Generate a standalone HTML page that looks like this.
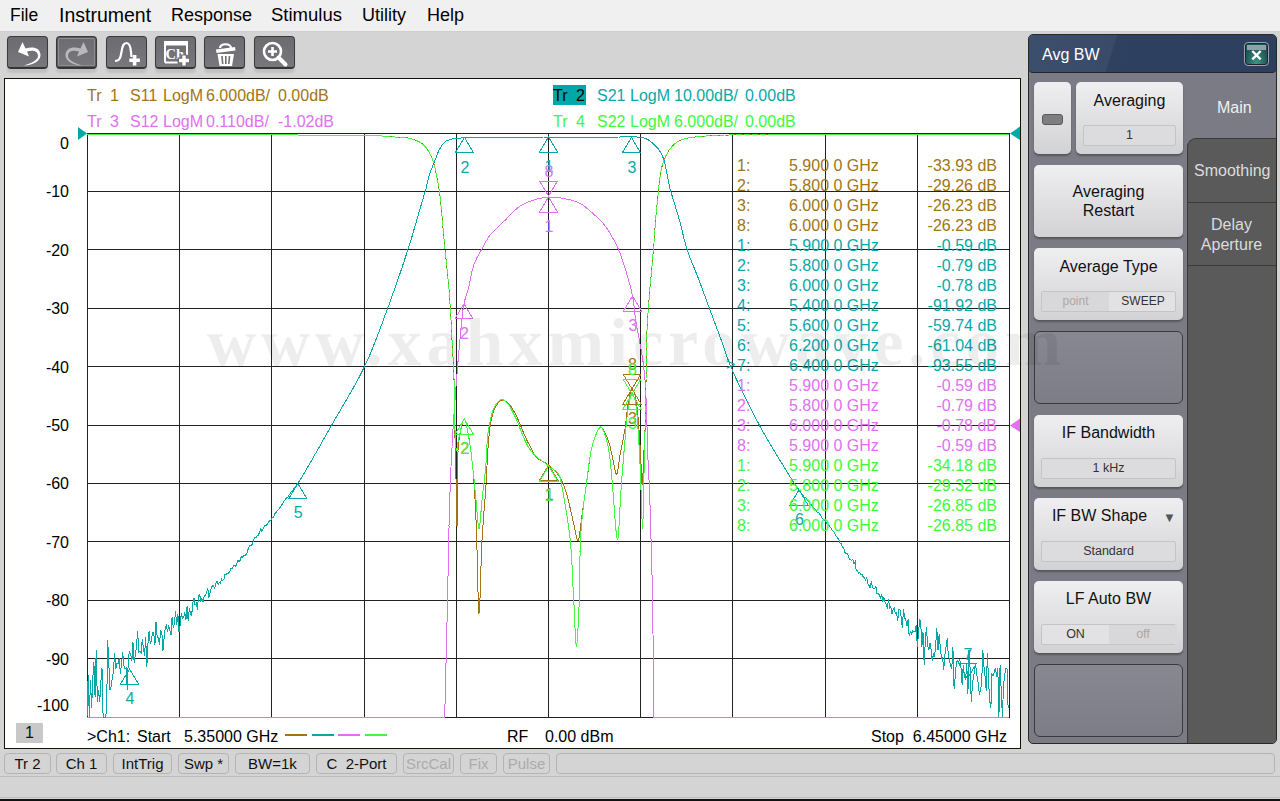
<!DOCTYPE html>
<html><head><meta charset="utf-8">
<style>
*{margin:0;padding:0;box-sizing:border-box}
html,body{width:1280px;height:801px;overflow:hidden;background:#d4d4d4;font-family:"Liberation Sans",sans-serif;position:relative}
.a{position:absolute;white-space:nowrap}
#menu{left:0;top:0;width:1280px;height:32px;background:#f0f0f0;border-bottom:1px solid #cecece}
.mi{font-size:19px;color:#000;top:4px;line-height:22px}
.tb{width:41px;height:33px;border-radius:4px;background:linear-gradient(#6c6b70,#78777c);border:1px solid #3a3a3c;border-bottom:2px solid #343436;box-shadow:0 4px 2px rgba(0,0,0,0.09)}
.tb svg{position:absolute;left:0;top:0}
#chart{left:4px;top:78px;width:1017px;height:671px;background:#fff;border:1px solid #141400}
.t16{font-size:16px;line-height:18px}
.yl{font-size:16px;line-height:18px;color:#000;text-align:right;width:40px;left:29px}
.c1{color:#a27414}.c2{color:#08a8a8}.c3{color:#e070f0}.c4{color:#40f840}
.sb{top:753px;height:21px;border:1px solid #b4b4b4;border-radius:4px;font-size:15px;color:#111;text-align:center;line-height:19px;background:#d4d4d4}
.sb.dis{color:#ababab}
#panel{left:1028px;top:34px;width:249px;height:710px;border-radius:5px;background:#7a7b84;border:1px solid #2a2a22;overflow:hidden}
.btn{position:absolute;border-radius:5px;background:linear-gradient(#efeff1,#d2d2d5);box-shadow:0 2px 2px rgba(0,0,0,0.3);font-size:16px;color:#111;text-align:center;line-height:19px}
.vb{position:absolute;left:7px;right:7px;height:21px;background:#dcdcde;border:1px solid #c4c4c6;border-radius:2px;font-size:12.5px;color:#333;line-height:19px;text-align:center}
.slot{position:absolute;border-radius:6px;background:linear-gradient(#878892,#7c7d86);border:1px solid #3a3a3e}
svg text.ml{font-family:"Liberation Sans",sans-serif;font-size:16px}
.mt{font-size:16px;line-height:18px}
</style></head><body>
<div id="menu" class="a"></div>
<div class="a mi" style="left:10px;font-size:17.5px">File</div>
<div class="a mi" style="left:59px;font-size:19.5px">Instrument</div>
<div class="a mi" style="left:171px;font-size:18px">Response</div>
<div class="a mi" style="left:271px;font-size:18.5px">Stimulus</div>
<div class="a mi" style="left:362px;font-size:18px">Utility</div>
<div class="a mi" style="left:427px;font-size:18px">Help</div>

<!-- toolbar -->
<div class="a tb" style="left:7px;top:36px"><svg width="41" height="33" viewBox="0 0 41 33"><path d="M14.5 5 L10 15 L21 19.5 L19 14.5 C25 12.5 30 14 30 19 C30 23 24 26 16 28.5 C26 28 32.5 24 32.5 18 C32.5 11 25 9 17.5 11.5 Z" fill="#fff"/></svg></div>
<div class="a tb" style="left:56px;top:36px;box-shadow:inset 0 0 0 1px #58575c, inset 0 0 0 2px #8e8d92, 0 4px 2px rgba(0,0,0,0.09)"><svg width="41" height="33" viewBox="0 0 41 33"><path d="M26.5 5 L31 15 L20 19.5 L22 14.5 C16 12.5 11 14 11 19 C11 23 17 26 25 28.5 C15 28 8.5 24 8.5 18 C8.5 11 16 9 23.5 11.5 Z" fill="#b9b9bb"/></svg></div>
<div class="a tb" style="left:106px;top:36px"><svg width="41" height="33" viewBox="0 0 41 33"><path d="M8 24 C12.5 24 13.5 21 14.5 15 C15.5 8.5 16.5 6 19.5 6 C22.5 6 23.5 9 24 15 L24.5 20" stroke="#fff" stroke-width="2.2" fill="none"/><path d="M27.6 18 V28.6 M22.3 23.3 H32.9" stroke="#fff" stroke-width="3.6"/></svg></div>
<div class="a tb" style="left:155px;top:36px"><svg width="41" height="33" viewBox="0 0 41 33"><path d="M9 25.5 V5 H31 V18" stroke="#fff" stroke-width="2" fill="none"/><rect x="8" y="4.5" width="24" height="4" fill="#fff"/><path d="M9 25.5 H22" stroke="#fff" stroke-width="2"/><text x="9.5" y="21.5" font-family="Liberation Serif" font-weight="bold" font-size="14.5" fill="#fff">Ch</text><path d="M28 17.5 V30 M21.5 23.5 H34" stroke="#6f6e73" stroke-width="6"/><path d="M28 18.5 V28.5 M23 23.5 H33" stroke="#fff" stroke-width="3.4"/></svg></div>
<div class="a tb" style="left:204px;top:36px"><svg width="41" height="33" viewBox="0 0 41 33"><path d="M15 11 C15.5 6 25.5 6 26 11" stroke="#fff" stroke-width="2.2" fill="none"/><path d="M11 12.5 L30 10 L30.5 13.5 L11.5 16 Z" fill="#fff"/><path d="M12.5 17 H29 L27 29 H14.5 Z" fill="#fff"/><path d="M17 19 L17.7 27 M20.8 19 V27 M24.5 19 L23.8 27" stroke="#6f6e73" stroke-width="1.6"/></svg></div>
<div class="a tb" style="left:254px;top:36px"><svg width="41" height="33" viewBox="0 0 41 33"><circle cx="17.5" cy="14.5" r="8.5" fill="none" stroke="#fff" stroke-width="2.6"/><path d="M23.5 20.5 L30.5 27.5" stroke="#fff" stroke-width="4" stroke-linecap="round"/><path d="M17.5 10 V19 M13 14.5 H22" stroke="#fff" stroke-width="2.6"/></svg></div>

<div id="chart" class="a"></div>

<!-- trace headers -->
<div class="a t16 c1" style="left:87px;top:87px">Tr</div><div class="a t16 c1" style="left:110px;top:87px">1</div><div class="a t16 c1" style="left:130px;top:87px">S11</div><div class="a t16 c1" style="left:163px;top:87px">LogM</div><div class="a t16 c1" style="left:206px;top:87px">6.000dB/</div><div class="a t16 c1" style="left:278px;top:87px">0.00dB</div>
<div class="a t16 c3" style="left:87px;top:113px">Tr</div><div class="a t16 c3" style="left:110px;top:113px">3</div><div class="a t16 c3" style="left:130px;top:113px">S12</div><div class="a t16 c3" style="left:163px;top:113px">LogM</div><div class="a t16 c3" style="left:206px;top:113px">0.110dB/</div><div class="a t16 c3" style="left:278px;top:113px">-1.02dB</div>
<div class="a" style="left:553px;top:85px;width:33px;height:20px;background:#00a8a8"></div>
<div class="a t16" style="left:553px;top:87px;color:#000">Tr</div><div class="a t16" style="left:576px;top:87px;color:#000">2</div><div class="a t16 c2" style="left:597px;top:87px">S21</div><div class="a t16 c2" style="left:630px;top:87px">LogM</div><div class="a t16 c2" style="left:674px;top:87px">10.00dB/</div><div class="a t16 c2" style="left:745px;top:87px">0.00dB</div>
<div class="a t16 c4" style="left:553px;top:113px">Tr</div><div class="a t16 c4" style="left:576px;top:113px">4</div><div class="a t16 c4" style="left:597px;top:113px">S22</div><div class="a t16 c4" style="left:630px;top:113px">LogM</div><div class="a t16 c4" style="left:674px;top:113px">6.000dB/</div><div class="a t16 c4" style="left:745px;top:113px">0.00dB</div>

<!-- y labels -->
<div class="a yl" style="top:135px">0</div>
<div class="a yl" style="top:183px">-10</div>
<div class="a yl" style="top:242px">-20</div>
<div class="a yl" style="top:300px">-30</div>
<div class="a yl" style="top:359px">-40</div>
<div class="a yl" style="top:417px">-50</div>
<div class="a yl" style="top:475px">-60</div>
<div class="a yl" style="top:534px">-70</div>
<div class="a yl" style="top:592px">-80</div>
<div class="a yl" style="top:651px">-90</div>
<div class="a yl" style="top:697px">-100</div>

<svg class="a" style="left:0;top:0" width="1280" height="801" viewBox="0 0 1280 801"><path d="M87.5 133 V717 M179.5 133 V717 M271.5 133 V717 M364.5 133 V717 M456.5 133 V717 M548.5 133 V717 M640.5 133 V717 M732.5 133 V717 M825.5 133 V717 M917.5 133 V717 M1009.5 133 V717 M87 133.5 H1009.5 M87 191.5 H1009.5 M87 249.5 H1009.5 M87 308.5 H1009.5 M87 366.5 H1009.5 M87 425.5 H1009.5 M87 483.5 H1009.5 M87 541.5 H1009.5 M87 600.5 H1009.5 M87 658.5 H1009.5 M87 717.5 H1009.5" stroke="#222" stroke-width="1" fill="none" shape-rendering="crispEdges"/><g fill="none" stroke-width="1" stroke-linejoin="miter" shape-rendering="crispEdges"><polyline points="87.0,717.0 444.7,717.0 447.5,601.6 447.5,601.6 447.5,601.4 447.5,601.2 447.5,600.9 447.5,600.4 447.5,600.0 447.5,599.4 447.6,598.7 447.6,598.0 447.6,597.2 447.6,596.3 447.6,595.4 447.6,594.3 447.7,593.3 447.7,592.1 447.7,590.9 447.7,589.6 447.7,588.3 447.8,586.9 447.8,585.5 447.8,584.0 447.9,582.5 447.9,580.9 447.9,579.3 447.9,577.6 448.0,575.9 448.0,574.2 448.0,572.4 448.1,570.6 448.1,568.8 448.2,566.9 448.2,565.0 448.2,563.1 448.3,561.2 448.3,559.3 448.3,557.3 448.4,555.3 448.4,553.3 448.5,551.4 448.5,549.4 448.5,547.4 448.6,545.3 448.6,543.3 448.7,541.3 448.7,539.3 448.8,537.3 448.8,535.4 448.8,533.4 448.9,531.4 448.9,529.5 449.0,527.6 449.0,525.7 449.1,523.8 449.1,522.0 449.2,520.1 449.2,518.3 449.2,516.6 449.3,514.9 449.3,513.2 449.4,511.5 449.4,509.9 449.5,508.3 449.5,506.8 449.5,505.4 449.6,503.9 449.6,502.6 449.7,501.3 449.7,500.0 449.8,498.3 449.8,496.6 449.9,494.9 449.9,493.2 450.0,491.6 450.0,490.0 450.1,488.5 450.2,486.9 450.2,485.4 450.3,483.9 450.3,482.4 450.4,480.9 450.4,479.5 450.5,478.0 450.6,476.6 450.6,475.2 450.7,473.7 450.7,472.3 450.8,470.9 450.9,469.5 450.9,468.1 451.0,466.7 451.1,465.4 451.1,464.0 451.2,462.6 451.3,461.1 451.3,459.7 451.4,458.3 451.5,456.9 451.6,455.4 451.6,454.0 451.7,452.5 451.8,451.0 451.9,449.6 452.0,448.1 452.0,446.7 452.1,445.2 452.2,443.8 452.3,442.3 452.4,440.9 452.4,439.4 452.5,438.0 452.6,436.6 452.7,435.1 452.8,433.7 452.9,432.2 452.9,430.8 453.0,429.3 453.1,427.9 453.2,426.4 453.3,425.0 453.4,423.5 453.5,422.0 453.6,420.6 453.7,419.1 453.8,417.7 453.9,416.2 454.0,414.7 454.1,413.3 454.2,411.8 454.3,410.3 454.4,408.9 454.5,407.4 454.6,405.9 454.7,404.4 454.8,403.0 454.9,401.5 455.0,400.0 455.1,398.5 455.2,397.1 455.3,395.6 455.4,394.1 455.5,392.6 455.7,391.1 455.8,389.6 455.9,388.1 456.0,386.6 456.1,385.1 456.2,383.6 456.3,382.0 456.5,380.5 456.6,379.0 456.7,377.5 456.8,375.9 456.9,374.4 457.1,372.9 457.2,371.4 457.3,369.9 457.4,368.3 457.6,366.8 457.7,365.3 457.8,363.8 457.9,362.3 458.1,360.8 458.2,359.3 458.3,357.9 458.5,356.4 458.6,354.9 458.7,353.5 458.8,352.0 459.0,350.6 459.1,349.2 459.2,347.8 459.4,346.4 459.5,345.0 459.6,343.4 459.8,341.8 459.9,340.2 460.1,338.6 460.2,337.0 460.4,335.3 460.5,333.7 460.7,332.1 460.8,330.5 460.9,328.9 461.1,327.3 461.2,325.7 461.4,324.1 461.5,322.6 461.7,321.0 461.8,319.5 462.0,318.0 462.2,316.5 462.3,315.1 462.5,313.7 462.7,312.3 462.8,310.9 463.0,309.6 463.2,308.4 463.4,307.1 463.6,305.9 463.8,304.8 464.0,303.7 464.4,302.0 464.7,300.5 465.1,299.2 465.5,297.9 465.9,296.6 466.3,295.4 466.7,294.2 467.2,292.9 467.6,291.5 468.0,290.0 468.3,288.8 468.6,287.5 468.9,286.1 469.2,284.7 469.5,283.3 469.8,281.8 470.1,280.3 470.4,278.8 470.7,277.2 471.0,275.7 471.4,274.2 471.7,272.7 472.0,271.2 472.4,269.7 472.8,268.3 473.2,267.0 473.6,265.6 474.0,264.4 474.5,263.0 475.1,261.6 475.7,260.3 476.3,259.0 476.9,257.8 477.6,256.6 478.2,255.4 478.9,254.2 479.6,253.0 480.3,251.8 480.9,250.6 481.6,249.4 482.3,248.1 483.0,246.8 483.7,245.5 484.4,244.2 485.1,242.9 485.8,241.6 486.6,240.3 487.4,239.1 488.2,237.8 489.1,236.5 490.0,235.3 490.8,234.3 491.7,233.2 492.6,232.2 493.6,231.2 494.6,230.2 495.6,229.2 496.6,228.2 497.6,227.2 498.7,226.2 499.8,225.2 500.8,224.2 501.9,223.2 502.9,222.3 504.0,221.3 505.0,220.3 506.1,219.3 507.1,218.2 508.2,217.1 509.2,216.0 510.3,214.9 511.3,213.9 512.4,212.8 513.4,211.7 514.5,210.7 515.6,209.7 516.7,208.8 517.8,207.9 518.9,207.0 520.0,206.2 521.3,205.4 522.6,204.7 524.0,203.9 525.4,203.3 526.7,202.7 528.1,202.1 529.5,201.5 530.9,201.0 532.3,200.6 533.6,200.1 535.0,199.7 536.4,199.3 537.7,198.9 539.0,198.6 540.3,198.3 541.7,198.0 543.0,197.8 544.4,197.6 545.7,197.5 547.1,197.3 548.5,197.2 549.8,197.2 551.2,197.2 552.5,197.2 553.9,197.3 555.3,197.4 556.7,197.5 558.1,197.7 559.5,197.8 560.9,198.0 562.3,198.3 563.7,198.5 565.0,198.8 566.4,199.0 567.8,199.3 569.3,199.7 570.7,200.0 572.1,200.4 573.5,200.8 574.8,201.2 576.2,201.7 577.5,202.2 578.8,202.8 580.0,203.4 581.2,204.1 582.4,204.8 583.6,205.6 584.7,206.4 585.8,207.3 586.9,208.2 587.9,209.1 589.0,210.0 590.1,211.0 591.2,212.0 592.3,212.9 593.3,213.8 594.3,214.7 595.4,215.7 596.4,216.6 597.5,217.6 598.6,218.6 599.6,219.7 600.6,220.7 601.6,221.8 602.6,222.8 603.5,223.9 604.4,225.0 605.3,226.2 606.2,227.4 607.1,228.7 607.9,229.9 608.8,231.2 609.6,232.6 610.3,233.9 611.1,235.1 611.8,236.4 612.5,237.7 613.2,238.9 613.8,240.0 614.6,241.4 615.3,242.7 615.9,244.0 616.5,245.2 617.1,246.5 617.8,247.9 618.4,249.4 618.9,250.5 619.3,251.7 619.8,252.9 620.3,254.1 620.7,255.4 621.2,256.7 621.7,258.0 622.2,259.4 622.7,260.8 623.1,262.2 623.6,263.6 624.1,265.1 624.5,266.5 625.0,268.0 625.4,269.3 625.8,270.6 626.2,271.9 626.6,273.2 627.0,274.6 627.4,276.0 627.8,277.4 628.2,278.8 628.6,280.2 629.0,281.7 629.4,283.1 629.8,284.6 630.2,286.0 630.6,287.5 630.9,288.9 631.3,290.3 631.6,291.8 631.9,293.2 632.2,294.6 632.5,296.0 632.8,297.5 633.0,298.9 633.3,300.3 633.5,301.8 633.7,303.2 633.9,304.6 634.0,306.0 634.2,307.4 634.4,308.9 634.5,310.3 634.7,311.7 634.8,313.1 635.0,314.6 635.2,316.0 635.4,317.5 635.6,319.0 635.8,320.5 636.0,322.0 636.2,323.4 636.5,324.7 636.7,326.1 636.9,327.6 637.2,329.0 637.5,330.4 637.8,331.9 638.0,333.4 638.3,334.8 638.6,336.3 638.9,337.8 639.2,339.3 639.5,340.8 639.7,342.2 640.0,343.7 640.3,345.2 640.6,346.6 640.8,348.1 641.1,349.5 641.3,350.9 641.6,352.3 641.8,353.7 642.0,355.0 642.2,356.5 642.5,358.0 642.7,359.4 642.9,360.8 643.1,362.2 643.2,363.5 643.4,364.8 643.6,366.1 643.8,367.5 643.9,368.9 644.1,370.3 644.2,371.7 644.4,373.2 644.6,374.8 644.7,376.4 644.9,378.2 645.0,380.0 645.1,381.1 645.2,382.2 645.2,383.4 645.3,384.6 645.4,385.8 645.5,387.0 645.5,388.3 645.6,389.7 645.7,391.0 645.7,392.4 645.8,393.8 645.9,395.3 645.9,396.7 646.0,398.2 646.1,399.7 646.1,401.2 646.2,402.8 646.2,404.3 646.3,405.9 646.4,407.5 646.4,409.1 646.5,410.7 646.5,412.3 646.6,413.9 646.6,415.6 646.7,417.2 646.7,418.9 646.8,420.5 646.8,422.2 646.9,423.8 646.9,425.5 647.0,427.1 647.0,428.8 647.1,430.4 647.1,432.1 647.2,433.7 647.2,435.3 647.2,436.9 647.3,438.5 647.3,440.1 647.4,441.6 647.4,443.2 647.5,444.7 647.5,446.2 647.6,447.7 647.6,449.2 647.7,450.6 647.7,452.1 647.8,453.5 647.8,454.8 647.9,456.2 647.9,457.5 647.9,458.8 648.0,460.0 648.1,461.7 648.1,463.4 648.2,464.9 648.3,466.5 648.4,468.0 648.4,469.5 648.5,470.9 648.6,472.3 648.6,473.7 648.7,475.0 648.8,476.4 648.8,477.7 648.9,479.1 649.0,480.4 649.0,481.7 649.1,483.1 649.1,484.5 649.2,485.8 649.3,487.2 649.3,488.7 649.4,490.2 649.5,491.7 649.5,493.2 649.6,494.8 649.7,496.5 649.7,498.2 649.8,500.0 649.8,501.2 649.9,502.4 649.9,503.7 650.0,505.1 650.0,506.5 650.1,508.0 650.1,509.5 650.2,511.1 650.2,512.7 650.3,514.4 650.3,516.1 650.4,517.8 650.4,519.6 650.5,521.4 650.5,523.2 650.6,525.1 650.6,527.0 650.7,528.9 650.8,530.8 650.8,532.8 650.9,534.8 650.9,536.7 651.0,538.7 651.0,540.7 651.1,542.7 651.1,544.7 651.2,546.8 651.3,548.8 651.3,550.8 651.4,552.8 651.4,554.8 651.5,556.7 651.5,558.7 651.6,560.7 651.6,562.6 651.7,564.5 651.7,566.4 651.8,568.2 651.8,570.1 651.9,571.9 651.9,573.6 652.0,575.4 652.0,577.1 652.1,578.7 652.1,580.3 652.1,581.9 652.2,583.4 652.2,584.9 652.3,586.3 652.3,587.7 652.3,589.0 652.4,590.2 652.4,591.4 652.4,592.5 652.4,593.6 652.5,594.5 652.5,595.4 652.5,596.3 652.5,597.0 652.5,597.7 652.6,598.3 652.6,598.8 652.6,599.2 652.6,599.6 652.6,599.8 652.6,600.0 652.6,600.0 654.0,717.0 1009.0,717.0" stroke="#e070f0"/><polyline points="87.0,717.0 88.2,674.6 89.3,717.0 90.5,679.7 91.6,708.4 92.8,678.5 93.9,662.3 95.1,697.4 96.2,650.0 97.4,702.4 98.5,690.3 99.7,702.2 100.8,682.5 102.0,668.4 103.1,717.0 104.3,717.0 105.4,717.0 106.6,710.9 107.7,640.0 108.9,665.5 110.0,690.2 111.2,686.7 112.3,678.1 113.5,670.7 114.6,652.9 115.8,669.4 116.9,663.8 118.1,663.3 119.2,658.3 120.4,673.9 121.5,664.1 122.7,652.0 123.8,665.2 125.0,668.7 126.1,668.1 127.3,690.3 128.4,656.4 129.6,652.6 130.7,654.8 131.9,660.8 133.0,642.4 134.2,663.0 135.3,655.3 136.5,646.7 137.6,631.0 138.8,652.3 139.9,651.2 141.1,653.3 142.2,639.4 143.4,647.0 144.5,656.2 145.7,637.0 146.8,667.0 148.0,643.1 149.1,631.1 150.3,643.8 151.4,640.2 152.6,632.5 153.7,633.1 154.9,645.3 156.0,622.2 157.2,637.4 158.3,637.5 159.5,644.5 160.6,630.7 161.8,631.2 162.9,651.4 164.1,638.4 165.2,627.9 166.4,625.3 167.5,631.9 168.7,625.1 169.8,630.7 171.0,634.9 172.1,617.0 173.3,627.5 174.4,623.2 175.6,611.5 176.7,625.3 177.9,614.2 179.0,631.9 180.2,625.3 181.3,613.3 182.5,618.1 183.6,617.5 184.8,612.3 185.9,620.0 187.1,606.3 188.2,621.4 189.4,607.9 190.5,614.1 191.7,615.2 192.8,602.5 194.0,598.1 195.1,605.2 196.3,603.6 197.4,609.5 198.6,595.4 199.7,594.8 200.9,601.2 202.0,598.6 203.2,602.4 204.3,595.3 205.5,595.7 206.6,592.6 207.8,588.4 208.9,597.8 210.1,592.2 211.2,588.1 212.4,585.7 213.5,585.2 214.7,588.5 215.8,583.2 217.0,581.4 218.1,584.5 219.3,582.5 220.4,583.1 221.6,579.3 222.7,580.7 223.9,579.2 225.0,573.8 226.2,574.5 227.3,573.3 228.5,573.1 229.6,572.3 230.8,568.7 231.9,568.9 233.1,566.5 234.2,565.5 235.4,566.0 236.5,565.1 237.7,560.4 238.8,561.3 240.0,560.7 241.1,556.7 242.3,557.4 243.4,556.1 244.6,555.1 245.7,555.0 246.9,553.6 248.0,549.6 249.2,546.3 250.3,545.1 251.5,545.8 252.6,543.2 253.8,539.0 254.9,537.7 256.1,537.7 257.2,536.0 258.4,535.2 259.5,532.3 260.7,528.9 261.8,531.4 263.0,529.3 264.1,526.6 265.3,525.0 266.4,525.8 267.6,523.4 268.7,521.9 269.9,520.6 271.0,520.0 272.2,517.7 273.3,517.5 274.5,514.4 275.6,512.7 276.8,511.6 277.9,510.1 279.1,508.8 280.2,507.4 281.4,505.0 282.5,504.0 283.7,501.6 284.8,500.3 286.0,498.5 287.1,497.7 288.3,496.4 289.4,494.5 290.3,493.3 291.1,492.2 292.0,491.1 292.9,490.0 293.7,488.9 294.5,487.8 295.4,486.7 296.2,485.6 297.0,484.5 297.8,483.4 298.5,482.2 299.3,481.1 300.0,480.0 300.7,478.9 301.4,477.8 302.1,476.7 302.8,475.5 303.5,474.2 304.3,472.9 305.1,471.5 306.0,470.0 306.5,469.1 307.1,468.1 307.7,467.1 308.3,466.1 308.9,465.0 309.6,463.9 310.2,462.8 310.9,461.6 311.6,460.5 312.2,459.3 313.0,458.0 313.7,456.8 314.4,455.5 315.1,454.2 315.9,452.9 316.7,451.6 317.4,450.2 318.2,448.9 319.0,447.5 319.8,446.1 320.5,444.7 321.3,443.3 322.1,441.9 322.9,440.5 323.7,439.1 324.5,437.7 325.3,436.2 326.2,434.8 327.0,433.4 327.8,432.0 328.6,430.6 329.3,429.2 330.1,427.8 330.9,426.4 331.7,425.0 332.4,423.8 333.1,422.6 333.8,421.3 334.5,420.1 335.2,418.9 336.0,417.6 336.7,416.3 337.4,415.1 338.2,413.8 338.9,412.6 339.7,411.3 340.4,410.0 341.2,408.7 341.9,407.4 342.7,406.1 343.5,404.8 344.2,403.5 345.0,402.2 345.7,400.9 346.5,399.6 347.3,398.3 348.0,397.0 348.8,395.7 349.6,394.4 350.3,393.0 351.1,391.7 351.8,390.4 352.6,389.1 353.4,387.7 354.1,386.4 354.8,385.1 355.6,383.8 356.3,382.4 357.0,381.1 357.7,379.8 358.5,378.4 359.2,377.1 359.9,375.8 360.5,374.4 361.2,373.1 361.9,371.8 362.6,370.5 363.2,369.1 363.9,367.8 364.5,366.5 365.1,365.1 365.8,363.8 366.4,362.4 367.0,361.0 367.7,359.7 368.3,358.3 368.9,356.9 369.5,355.5 370.1,354.2 370.6,352.8 371.2,351.4 371.8,350.0 372.4,348.7 372.9,347.3 373.5,345.9 374.0,344.5 374.6,343.1 375.1,341.8 375.7,340.4 376.2,339.0 376.7,337.6 377.3,336.2 377.8,334.8 378.3,333.5 378.9,332.1 379.4,330.7 379.9,329.3 380.4,327.9 380.9,326.5 381.4,325.1 382.0,323.7 382.5,322.3 383.0,320.9 383.5,319.6 384.0,318.2 384.5,316.8 385.0,315.4 385.5,314.0 386.1,312.6 386.6,311.2 387.1,309.8 387.6,308.4 388.1,307.0 388.6,305.6 389.2,304.2 389.7,302.8 390.2,301.4 390.7,300.0 391.2,298.6 391.7,297.1 392.2,295.7 392.7,294.3 393.2,292.9 393.7,291.5 394.2,290.1 394.8,288.6 395.3,287.2 395.8,285.8 396.3,284.4 396.7,282.9 397.2,281.5 397.7,280.1 398.2,278.7 398.7,277.3 399.2,275.8 399.7,274.4 400.2,273.0 400.7,271.6 401.1,270.2 401.6,268.8 402.1,267.3 402.6,265.9 403.0,264.5 403.5,263.1 404.0,261.7 404.4,260.3 404.9,258.9 405.3,257.6 405.8,256.2 406.2,254.8 406.7,253.4 407.1,252.0 407.6,250.7 408.0,249.3 408.5,247.8 409.0,246.3 409.4,244.8 409.9,243.2 410.4,241.6 410.9,240.0 411.4,238.4 411.9,236.8 412.4,235.1 412.9,233.5 413.4,231.8 413.8,230.2 414.3,228.5 414.8,226.9 415.3,225.2 415.8,223.6 416.2,222.0 416.7,220.4 417.1,218.8 417.6,217.3 418.0,215.8 418.5,214.3 418.9,212.8 419.3,211.4 419.7,210.0 420.1,208.6 420.5,207.3 420.8,206.1 421.2,204.9 421.5,203.7 421.8,202.6 422.1,201.6 422.4,200.6 422.7,199.6 423.0,198.8 423.2,198.0 423.7,196.3 424.1,195.1 424.5,194.0 424.9,192.8 425.3,191.4 425.6,190.3 425.9,189.1 426.2,187.8 426.5,186.4 426.8,184.9 427.2,183.4 427.5,181.9 427.9,180.4 428.2,178.9 428.6,177.5 428.9,176.1 429.3,174.7 429.7,173.5 430.2,172.1 430.7,170.7 431.2,169.4 431.8,168.2 432.3,166.9 432.8,165.7 433.4,164.4 434.0,163.0 434.5,161.7 435.0,160.4 435.6,158.9 436.1,157.5 436.7,156.0 437.2,154.6 437.8,153.1 438.4,151.7 439.0,150.4 439.6,149.2 440.2,148.1 441.0,146.7 441.8,145.5 442.7,144.3 443.5,143.3 444.5,142.3 445.5,141.5 446.7,140.8 448.1,140.2 449.5,139.7 450.9,139.3 452.4,139.0 453.7,138.7 455.0,138.5 456.3,138.4 457.8,138.2 459.4,138.1 461.2,138.0 462.2,137.9 463.3,137.9 464.5,137.8 465.7,137.8 467.0,137.8 468.4,137.7 469.8,137.7 471.3,137.7 472.9,137.7 474.4,137.7 476.0,137.7 477.7,137.7 479.3,137.6 481.0,137.6 482.7,137.6 484.3,137.6 486.0,137.6 487.7,137.6 489.3,137.6 491.0,137.6 492.6,137.6 494.1,137.6 495.7,137.6 497.2,137.6 498.6,137.6 500.0,137.6 501.5,137.6 503.1,137.6 504.6,137.6 506.1,137.6 507.5,137.5 509.0,137.5 510.5,137.5 511.9,137.5 513.3,137.5 514.7,137.5 516.1,137.5 517.5,137.5 518.9,137.5 520.3,137.5 521.6,137.5 523.0,137.4 524.3,137.4 525.7,137.4 527.0,137.4 528.5,137.4 529.9,137.4 531.3,137.3 532.7,137.3 534.1,137.3 535.4,137.2 536.8,137.2 538.2,137.2 539.5,137.1 540.9,137.1 542.3,137.1 543.6,137.0 545.1,137.0 546.5,137.0 548.0,137.0 549.4,137.0 550.8,137.0 552.2,137.0 553.7,137.0 555.1,137.0 556.6,137.0 558.1,137.0 559.6,137.0 561.1,137.0 562.6,137.1 564.2,137.1 565.7,137.1 567.2,137.1 568.7,137.1 570.2,137.1 571.7,137.2 573.1,137.2 574.6,137.2 576.0,137.2 577.4,137.2 578.9,137.2 580.3,137.2 581.6,137.3 583.0,137.3 584.3,137.3 585.7,137.3 587.0,137.3 588.4,137.4 589.7,137.4 591.1,137.4 592.5,137.4 593.9,137.4 595.4,137.4 596.9,137.5 598.4,137.5 600.0,137.5 601.3,137.5 602.7,137.5 604.1,137.5 605.5,137.4 607.1,137.4 608.6,137.4 610.2,137.3 611.8,137.3 613.5,137.2 615.2,137.1 616.8,137.1 618.5,137.0 620.2,137.0 621.9,136.9 623.6,136.9 625.2,136.8 626.9,136.8 628.5,136.8 630.0,136.8 631.6,136.8 633.1,136.8 634.5,136.9 635.9,136.9 637.2,137.0 638.5,137.1 639.7,137.3 640.8,137.4 641.9,137.6 642.8,137.8 644.4,138.2 645.8,138.7 647.0,139.3 648.2,139.9 649.2,140.5 650.3,141.3 651.4,142.2 652.4,143.0 653.3,143.8 654.3,144.7 655.3,145.6 656.2,146.6 657.2,147.6 658.1,148.8 659.0,149.9 659.9,151.2 660.7,152.6 661.5,154.0 662.0,155.0 662.5,156.2 662.9,157.3 663.4,158.6 663.8,159.9 664.2,161.2 664.6,162.6 664.9,164.0 665.3,165.5 665.6,167.0 665.9,168.5 666.2,170.1 666.6,171.7 666.9,173.2 667.2,174.8 667.5,176.4 667.8,178.0 668.1,179.6 668.4,181.1 668.7,182.7 669.0,184.2 669.3,185.7 669.7,187.2 670.0,188.6 670.4,190.0 670.8,191.5 671.2,193.0 671.7,194.4 672.1,195.9 672.5,197.4 673.0,198.8 673.4,200.2 673.8,201.7 674.3,203.1 674.7,204.5 675.2,205.9 675.6,207.3 676.0,208.7 676.5,210.1 676.9,211.5 677.3,212.9 677.8,214.3 678.2,215.8 678.6,217.2 679.0,218.6 679.4,220.0 679.8,221.4 680.2,222.8 680.5,224.2 680.9,225.6 681.2,227.0 681.6,228.4 681.9,229.8 682.2,231.2 682.5,232.6 682.9,234.0 683.2,235.4 683.5,236.7 683.9,238.1 684.2,239.5 684.6,240.9 685.0,242.3 685.3,243.7 685.7,245.1 686.1,246.5 686.6,247.9 687.0,249.3 687.5,250.7 687.9,252.1 688.4,253.5 688.9,254.9 689.5,256.3 690.0,257.7 690.6,259.1 691.1,260.5 691.7,261.9 692.2,263.3 692.8,264.7 693.4,266.1 694.0,267.5 694.5,268.9 695.1,270.3 695.7,271.7 696.3,273.1 696.8,274.5 697.4,275.9 697.9,277.2 698.5,278.6 699.0,280.0 699.5,281.4 700.0,282.7 700.5,284.1 701.0,285.5 701.5,286.8 702.0,288.2 702.5,289.5 703.0,290.9 703.5,292.2 704.0,293.6 704.5,294.9 705.0,296.3 705.5,297.6 706.0,299.0 706.4,300.3 706.9,301.7 707.4,303.0 707.9,304.4 708.4,305.7 708.9,307.0 709.4,308.4 709.9,309.8 710.4,311.1 710.9,312.5 711.4,313.8 711.9,315.1 712.4,316.5 712.9,317.8 713.4,319.2 713.9,320.5 714.4,321.9 714.9,323.2 715.4,324.6 716.0,325.9 716.5,327.3 717.0,328.6 717.5,330.0 718.0,331.3 718.5,332.7 719.0,334.1 719.5,335.4 720.0,336.8 720.5,338.1 721.0,339.4 721.4,340.8 721.9,342.1 722.3,343.3 722.8,344.6 723.2,345.9 723.6,347.2 724.1,348.5 724.5,349.8 724.9,351.1 725.4,352.4 725.9,353.8 726.3,355.1 726.8,356.5 727.3,357.8 727.9,359.2 728.4,360.6 729.0,362.1 729.5,363.6 730.2,365.1 730.8,366.6 731.3,367.7 731.8,368.9 732.3,370.1 732.8,371.3 733.4,372.5 733.9,373.7 734.5,375.0 735.1,376.3 735.6,377.6 736.2,378.9 736.9,380.2 737.5,381.5 738.1,382.9 738.7,384.2 739.4,385.6 740.0,387.0 740.7,388.4 741.4,389.8 742.0,391.2 742.7,392.6 743.4,394.0 744.1,395.4 744.8,396.8 745.5,398.2 746.2,399.6 746.9,401.0 747.6,402.4 748.3,403.8 749.0,405.2 749.7,406.6 750.4,407.9 751.0,409.3 751.7,410.6 752.4,412.0 753.1,413.3 753.8,414.6 754.5,415.9 755.1,417.2 755.8,418.5 756.5,419.8 757.1,421.0 757.8,422.2 758.4,423.4 759.2,424.8 759.9,426.2 760.7,427.6 761.5,429.0 762.2,430.4 763.0,431.8 763.8,433.1 764.5,434.5 765.3,435.8 766.0,437.1 766.8,438.5 767.6,439.8 768.3,441.1 769.1,442.4 769.9,443.6 770.6,444.9 771.4,446.2 772.1,447.4 772.9,448.7 773.6,449.9 774.4,451.2 775.1,452.4 775.9,453.6 776.6,454.8 777.3,456.0 778.1,457.2 778.8,458.4 779.5,459.6 780.3,460.8 781.0,462.0 781.8,463.3 782.6,464.6 783.4,465.9 784.1,467.1 784.9,468.4 785.6,469.6 786.4,470.8 787.1,472.0 787.8,473.2 788.5,474.4 789.3,475.6 790.0,476.7 790.8,477.9 791.5,479.1 792.3,480.3 793.0,481.5 793.8,482.6 794.6,483.8 795.5,485.0 796.3,486.3 797.2,487.5 798.1,488.7 799.0,490.0 799.8,491.1 800.0,490.9 801.1,493.4 802.3,494.7 803.4,495.8 804.6,497.5 805.7,497.5 806.9,499.9 808.0,500.8 809.2,502.0 810.3,504.2 811.5,504.8 812.6,506.2 813.8,507.7 814.9,508.9 816.1,510.5 817.2,512.1 818.4,512.1 819.5,513.7 820.7,515.5 821.8,517.6 823.0,518.7 824.1,520.0 825.3,520.7 826.4,523.0 827.6,523.2 828.7,525.0 829.9,526.9 831.0,527.8 832.2,530.8 833.3,531.0 834.5,533.1 835.6,535.1 836.8,537.0 837.9,538.2 839.1,540.5 840.2,543.9 841.4,543.6 842.5,547.3 843.7,547.5 844.8,552.3 846.0,554.0 847.1,553.5 848.3,555.1 849.4,559.0 850.6,559.7 851.7,560.2 852.9,559.5 854.0,563.5 855.2,561.8 856.3,570.9 857.5,570.3 858.6,573.1 859.8,572.8 860.9,575.1 862.1,574.4 863.2,577.0 864.4,577.8 865.5,580.1 866.7,577.4 867.8,583.5 869.0,585.5 870.1,587.6 871.3,581.2 872.4,587.3 873.6,588.5 874.7,588.5 875.9,586.0 877.0,593.9 878.2,593.0 879.3,594.9 880.5,598.0 881.6,593.8 882.8,601.6 883.9,597.8 885.1,602.5 886.2,604.7 887.4,607.5 888.5,598.9 889.7,607.6 890.8,606.2 892.0,614.0 893.1,609.7 894.3,608.0 895.4,613.8 896.6,612.4 897.7,620.9 898.9,609.6 900.0,610.0 901.2,617.6 902.3,627.9 903.5,609.2 904.6,618.3 905.8,619.5 906.9,626.2 908.1,619.5 909.2,636.4 910.4,631.4 911.5,633.5 912.7,631.0 913.8,631.2 915.0,631.8 916.1,625.4 917.3,646.6 918.4,634.7 919.6,619.3 920.7,622.4 921.9,646.7 923.0,632.5 924.2,664.9 925.3,640.9 926.5,626.8 927.6,645.6 928.8,650.0 929.9,642.7 931.1,649.7 932.2,661.0 933.4,654.4 934.5,657.1 935.7,644.5 936.8,627.8 938.0,650.1 939.1,634.5 940.3,646.6 941.4,658.3 942.6,657.9 943.7,670.0 944.9,655.1 946.0,646.9 947.2,638.4 948.3,654.9 949.5,660.2 950.6,666.0 951.8,668.2 952.9,647.2 954.1,689.0 955.2,677.3 956.4,662.0 957.5,661.0 958.7,662.1 959.8,659.1 961.0,668.4 962.1,684.7 963.3,665.0 964.4,675.9 965.6,680.2 966.7,662.8 967.9,693.9 969.0,650.2 970.2,670.6 971.3,702.4 972.5,682.8 973.6,677.5 974.8,667.7 975.9,666.8 977.1,676.6 978.2,683.0 979.4,695.1 980.5,690.1 981.7,683.0 982.8,649.8 984.0,666.8 985.1,677.1 986.3,690.9 987.4,653.2 988.6,682.6 989.7,700.8 990.9,707.6 992.0,674.0 993.2,675.8 994.3,671.9 995.5,667.9 996.6,676.9 997.8,667.7 998.9,717.0 1000.1,664.7 1001.2,690.1 1002.4,717.0 1003.5,685.9 1004.7,675.4 1005.8,668.3 1007.0,668.5 1008.1,707.6" stroke="#08a8a8"/><polyline points="87.0,134.0 87.0,134.0 87.1,134.0 87.3,134.0 87.5,134.0 87.7,134.0 88.0,134.0 88.4,134.0 88.8,134.0 89.3,134.0 89.8,134.0 90.4,134.0 91.0,134.0 91.7,134.0 92.4,134.0 93.1,134.0 94.0,134.0 94.8,134.0 95.7,134.0 96.7,134.0 97.6,134.0 98.7,134.0 99.7,134.0 100.9,134.0 102.0,134.0 103.2,134.0 104.4,134.0 105.7,134.0 107.0,134.0 108.3,134.0 109.7,134.0 111.1,134.0 112.5,134.0 114.0,134.0 115.5,134.0 117.0,134.0 118.6,134.0 120.2,134.0 121.8,134.0 123.5,134.0 125.1,134.0 126.8,134.0 128.5,134.0 130.3,134.0 132.0,134.0 133.8,134.0 135.6,134.0 137.5,134.0 139.3,134.0 141.2,134.0 143.1,134.0 145.0,134.0 146.9,134.0 148.8,134.0 150.8,134.0 152.7,134.0 154.7,134.0 156.7,134.0 158.7,134.0 160.7,134.0 162.7,134.0 164.8,134.0 166.8,134.0 168.8,134.0 170.9,134.0 172.9,134.0 175.0,134.0 177.0,134.0 179.1,134.0 181.2,134.0 183.2,134.0 185.3,134.0 187.4,134.0 189.4,134.0 191.5,134.0 193.6,134.0 195.6,134.0 197.7,134.0 199.7,134.0 201.7,134.0 203.8,134.0 205.8,134.0 207.8,134.0 209.8,134.0 211.8,134.0 213.8,134.0 215.7,134.0 217.7,134.0 219.6,134.0 221.6,134.0 223.5,134.0 225.4,134.0 227.3,134.0 229.1,134.0 231.0,134.1 232.8,134.1 234.6,134.1 236.4,134.1 238.1,134.1 239.8,134.1 241.6,134.1 243.2,134.1 244.9,134.1 246.5,134.1 248.1,134.1 249.7,134.1 251.2,134.1 252.8,134.1 254.3,134.1 255.7,134.1 257.1,134.2 258.5,134.2 259.9,134.2 261.2,134.2 262.5,134.2 263.7,134.2 264.9,134.2 266.1,134.2 267.2,134.2 268.3,134.2 269.4,134.2 270.4,134.3 271.4,134.3 272.3,134.3 273.2,134.3 274.0,134.3 276.0,134.3 277.9,134.4 279.6,134.4 281.1,134.4 282.6,134.5 284.0,134.5 285.3,134.6 286.5,134.6 287.7,134.7 288.9,134.7 290.1,134.7 291.3,134.8 292.5,134.8 293.8,134.9 295.2,134.9 296.7,134.9 298.3,135.0 300.0,135.0 301.2,135.0 302.3,135.0 303.6,135.0 304.9,135.1 306.2,135.1 307.5,135.1 308.9,135.1 310.3,135.1 311.8,135.1 313.3,135.1 314.8,135.1 316.3,135.1 317.9,135.1 319.5,135.1 321.1,135.1 322.7,135.1 324.3,135.1 325.9,135.1 327.6,135.1 329.2,135.1 330.9,135.1 332.6,135.1 334.2,135.1 335.9,135.1 337.6,135.1 339.3,135.1 340.9,135.1 342.6,135.1 344.2,135.1 345.9,135.1 347.5,135.1 349.1,135.1 350.7,135.1 352.3,135.1 353.8,135.1 355.3,135.1 356.8,135.1 358.3,135.2 359.7,135.2 361.2,135.2 362.5,135.2 363.9,135.2 365.2,135.3 366.5,135.3 367.7,135.3 368.9,135.4 370.0,135.4 371.8,135.5 373.6,135.5 375.3,135.6 377.0,135.7 378.6,135.8 380.2,135.9 381.7,136.0 383.2,136.1 384.6,136.2 386.1,136.3 387.4,136.4 388.8,136.5 390.1,136.6 391.4,136.7 392.6,136.8 393.8,136.9 395.0,137.0 396.6,137.1 398.1,137.1 399.5,137.2 400.8,137.2 402.1,137.3 403.4,137.4 404.7,137.5 406.0,137.7 407.4,137.9 408.9,138.2 410.3,138.5 411.7,138.9 413.1,139.3 414.4,139.7 415.7,140.2 417.0,140.8 418.2,141.4 419.4,142.0 420.6,142.7 421.7,143.4 422.7,144.2 423.7,145.0 424.6,145.9 425.4,146.8 426.2,147.8 427.0,149.0 427.6,150.0 428.3,151.1 429.0,152.2 429.7,153.5 430.3,154.7 431.0,156.1 431.6,157.4 432.2,158.7 432.7,160.0 433.2,161.2 433.7,162.5 434.0,163.8 434.4,165.1 434.7,166.4 435.0,167.7 435.2,169.0 435.5,170.3 435.8,171.7 436.1,173.0 436.4,174.4 436.7,175.8 436.9,177.2 437.2,178.6 437.5,180.1 437.8,181.5 438.0,182.9 438.3,184.3 438.5,185.7 438.7,187.1 438.9,188.3 439.1,189.5 439.3,190.8 439.5,192.0 439.6,193.3 439.8,194.7 440.0,196.3 440.2,198.0 440.3,199.0 440.4,200.0 440.5,201.2 440.7,202.3 440.8,203.5 440.9,204.8 441.0,206.1 441.2,207.4 441.3,208.8 441.4,210.3 441.6,211.7 441.7,213.2 441.9,214.7 442.0,216.2 442.1,217.8 442.3,219.4 442.4,221.0 442.6,222.6 442.7,224.2 442.9,225.9 443.0,227.5 443.2,229.1 443.3,230.8 443.4,232.4 443.6,234.0 443.7,235.7 443.9,237.3 444.0,238.9 444.2,240.4 444.3,242.0 444.4,243.5 444.6,245.0 444.7,246.5 444.9,248.0 445.0,249.4 445.1,250.9 445.3,252.5 445.4,254.0 445.6,255.5 445.8,256.9 445.9,258.4 446.1,259.9 446.2,261.4 446.4,262.8 446.5,264.3 446.7,265.7 446.8,267.2 447.0,268.6 447.1,270.1 447.3,271.5 447.4,272.9 447.6,274.4 447.7,275.8 447.9,277.3 448.0,278.7 448.2,280.2 448.3,281.6 448.4,283.1 448.6,284.6 448.7,286.0 448.8,287.5 449.0,289.0 449.1,290.5 449.2,292.0 449.3,293.4 449.4,294.9 449.5,296.3 449.6,297.8 449.7,299.2 449.8,300.7 449.9,302.2 450.0,303.7 450.1,305.3 450.2,306.8 450.3,308.3 450.4,309.8 450.5,311.3 450.6,312.9 450.6,314.4 450.7,315.9 450.8,317.4 450.9,318.9 451.0,320.4 451.0,321.9 451.1,323.4 451.2,324.9 451.3,326.4 451.3,327.8 451.4,329.3 451.5,330.7 451.6,332.1 451.6,333.4 451.7,334.8 451.8,336.1 451.9,337.5 451.9,338.7 452.0,340.0 452.1,341.6 452.2,343.2 452.3,344.7 452.4,346.1 452.4,347.6 452.5,349.0 452.6,350.4 452.7,351.8 452.8,353.1 452.9,354.5 452.9,355.8 453.0,357.2 453.1,358.5 453.2,359.9 453.2,361.3 453.3,362.7 453.4,364.1 453.4,365.5 453.5,367.0 453.6,368.4 453.6,369.7 453.7,371.1 453.7,372.5 453.8,373.9 453.8,375.3 453.9,376.7 453.9,378.1 454.0,379.5 454.0,380.9 454.1,382.4 454.1,383.8 454.1,385.3 454.2,386.7 454.2,388.2 454.3,389.6 454.3,391.1 454.3,392.6 454.4,394.0 454.4,395.5 454.4,397.0 454.5,398.5 454.5,400.0 454.5,401.4 454.6,402.8 454.6,404.2 454.6,405.6 454.6,407.1 454.6,408.5 454.7,409.9 454.7,411.3 454.7,412.7 454.7,414.2 454.7,415.6 454.7,417.1 454.7,418.5 454.8,420.0 454.8,421.5 454.8,422.9 454.8,424.4 454.8,425.9 454.8,427.4 454.8,429.0 454.9,430.5 454.9,432.0 454.9,433.6 454.9,435.2 454.9,436.8 455.0,438.4 455.0,440.0 455.0,441.3 455.1,442.7 455.1,444.1 455.1,445.5 455.1,446.9 455.2,448.4 455.2,449.8 455.2,451.3 455.3,452.8 455.3,454.3 455.4,455.9 455.4,457.4 455.4,459.0 455.5,460.5 455.5,462.1 455.6,463.7 455.6,465.3 455.6,466.8 455.7,468.4 455.7,470.0 455.8,471.6 455.8,473.1 455.9,474.7 455.9,476.3 455.9,477.8 456.0,479.4 456.0,480.9 456.1,482.4 456.1,483.9 456.1,485.4 456.2,486.8 456.2,488.3 456.2,489.7 456.3,491.1 456.3,492.4 456.4,493.8 456.4,495.1 456.4,496.4 456.4,497.6 456.5,498.8 456.5,500.0 456.5,501.8 456.6,503.6 456.6,505.6 456.6,507.5 456.7,509.4 456.7,511.4 456.7,513.3 456.8,515.1 456.8,516.9 456.8,518.6 456.8,520.2 456.9,521.6 456.9,522.8 456.9,523.9 456.9,524.8 456.9,525.5 457.0,525.9 457.0,526.0 457.0,525.9 457.0,525.7 457.0,525.3 457.1,524.7 457.1,524.1 457.1,523.2 457.1,522.3 457.1,521.3 457.1,520.1 457.1,518.8 457.1,517.5 457.1,516.0 457.2,514.5 457.2,512.9 457.2,511.2 457.2,509.4 457.2,507.6 457.2,505.8 457.2,503.9 457.2,502.0 457.2,500.1 457.2,498.1 457.3,496.1 457.3,494.2 457.3,492.2 457.3,490.2 457.3,488.3 457.3,486.4 457.4,484.5 457.4,482.6 457.4,480.8 457.4,479.0 457.4,477.3 457.5,475.7 457.5,474.2 457.5,472.7 457.6,471.3 457.6,470.0 457.6,468.4 457.7,466.8 457.7,465.2 457.7,463.6 457.8,462.1 457.8,460.6 457.8,459.1 457.8,457.6 457.9,456.2 457.9,454.8 457.9,453.4 458.0,452.0 458.0,450.6 458.1,449.2 458.2,447.9 458.3,446.5 458.4,445.2 458.5,443.9 458.7,442.6 458.8,441.3 459.0,440.0 459.2,438.4 459.5,436.7 459.8,434.9 460.2,433.0 460.5,431.1 460.9,429.3 461.3,427.5 461.7,425.8 462.1,424.2 462.5,422.7 462.8,421.5 463.2,420.4 463.6,419.7 464.0,419.2 464.3,419.0 464.7,419.2 465.1,419.9 465.5,421.0 465.8,422.3 466.2,423.9 466.6,425.6 467.0,427.5 467.3,429.4 467.7,431.2 468.0,433.0 468.2,434.2 468.5,435.4 468.7,436.7 468.9,438.0 469.2,439.3 469.4,440.7 469.6,442.1 469.8,443.5 470.0,444.9 470.3,446.4 470.5,447.9 470.7,449.4 470.9,451.0 471.1,452.5 471.3,454.1 471.5,455.7 471.7,457.3 471.9,459.0 472.0,460.6 472.2,462.3 472.4,464.0 472.5,465.3 472.7,466.5 472.8,467.8 472.9,469.1 473.0,470.4 473.1,471.8 473.2,473.1 473.3,474.5 473.5,475.8 473.6,477.2 473.7,478.6 473.8,480.0 473.9,481.4 474.0,482.8 474.1,484.2 474.2,485.7 474.3,487.1 474.3,488.6 474.4,490.1 474.5,491.6 474.6,493.1 474.7,494.6 474.8,496.1 474.9,497.6 475.0,499.2 475.0,500.7 475.1,502.3 475.2,503.8 475.3,505.4 475.4,507.0 475.4,508.6 475.5,510.2 475.6,511.8 475.7,513.4 475.8,515.1 475.8,516.7 475.9,518.3 476.0,520.0 476.1,521.3 476.1,522.7 476.2,524.1 476.2,525.6 476.3,527.1 476.4,528.7 476.4,530.3 476.5,532.0 476.5,533.7 476.6,535.4 476.6,537.2 476.7,539.0 476.7,540.8 476.8,542.7 476.8,544.5 476.9,546.4 476.9,548.3 477.0,550.3 477.0,552.2 477.1,554.2 477.1,556.1 477.2,558.1 477.2,560.1 477.3,562.1 477.3,564.0 477.3,566.0 477.4,568.0 477.4,569.9 477.5,571.9 477.5,573.8 477.6,575.7 477.6,577.6 477.7,579.5 477.7,581.3 477.7,583.1 477.8,584.9 477.8,586.7 477.9,588.4 477.9,590.1 478.0,591.7 478.0,593.3 478.0,594.9 478.1,596.4 478.1,597.9 478.2,599.3 478.2,600.7 478.3,602.0 478.3,603.2 478.3,604.4 478.4,605.5 478.4,606.5 478.5,607.5 478.5,608.4 478.6,609.3 478.6,610.0 478.7,610.7 478.7,611.3 478.8,611.8 478.8,612.2 478.9,612.6 478.9,612.8 478.9,613.0 479.0,613.0 479.1,612.9 479.1,612.7 479.2,612.4 479.2,612.0 479.3,611.5 479.3,610.8 479.4,610.1 479.5,609.2 479.5,608.3 479.6,607.3 479.6,606.1 479.7,604.9 479.7,603.7 479.8,602.3 479.8,600.9 479.9,599.4 480.0,597.8 480.0,596.2 480.1,594.5 480.1,592.8 480.2,591.1 480.2,589.3 480.3,587.4 480.4,585.5 480.4,583.6 480.5,581.7 480.5,579.8 480.6,577.8 480.7,575.8 480.7,573.8 480.8,571.8 480.8,569.8 480.9,567.9 481.0,565.9 481.0,563.9 481.1,562.0 481.2,560.0 481.2,558.1 481.3,556.3 481.4,554.4 481.4,552.6 481.5,550.8 481.6,549.1 481.6,547.5 481.7,545.8 481.8,544.3 481.9,542.8 481.9,541.4 482.0,540.0 482.1,538.4 482.2,536.8 482.3,535.3 482.4,533.8 482.5,532.3 482.6,530.8 482.7,529.3 482.8,527.9 482.9,526.4 483.0,525.0 483.1,523.6 483.2,522.2 483.3,520.8 483.4,519.5 483.5,518.1 483.6,516.7 483.7,515.3 483.8,514.0 483.9,512.6 484.0,511.2 484.2,509.8 484.3,508.4 484.4,507.0 484.5,505.6 484.6,504.1 484.7,502.7 484.8,501.2 484.9,499.8 485.1,498.3 485.2,496.7 485.3,495.2 485.4,493.6 485.5,492.2 485.6,490.9 485.7,489.4 485.8,488.0 485.9,486.5 486.0,485.0 486.0,483.5 486.1,481.9 486.2,480.4 486.3,478.8 486.4,477.2 486.5,475.6 486.6,474.0 486.6,472.3 486.7,470.7 486.8,469.1 486.9,467.4 487.0,465.7 487.1,464.1 487.2,462.4 487.3,460.8 487.4,459.1 487.4,457.5 487.5,455.8 487.6,454.2 487.7,452.6 487.8,451.0 487.9,449.4 488.0,447.8 488.1,446.3 488.3,444.8 488.4,443.2 488.5,441.8 488.6,440.3 488.7,438.9 488.8,437.4 489.0,436.1 489.1,434.7 489.2,433.4 489.4,432.2 489.5,430.9 489.7,429.7 489.8,428.6 490.0,427.5 490.1,426.4 490.3,425.4 490.6,423.6 490.9,422.0 491.2,420.4 491.5,418.9 491.8,417.5 492.1,416.1 492.4,414.8 492.8,413.6 493.2,412.4 493.6,411.2 494.0,410.1 494.5,409.1 495.0,408.0 495.8,406.5 496.7,405.0 497.6,403.6 498.5,402.3 499.5,401.2 500.6,400.4 501.6,400.0 502.8,400.0 504.1,400.4 505.5,401.1 506.8,402.0 508.0,403.0 508.9,403.8 509.8,404.8 510.6,405.8 511.4,406.9 512.1,408.2 512.9,409.5 513.7,410.9 514.6,412.4 515.1,413.4 515.7,414.5 516.2,415.6 516.8,416.8 517.4,418.1 518.0,419.4 518.6,420.8 519.2,422.2 519.8,423.6 520.4,425.0 521.0,426.5 521.6,428.0 522.2,429.5 522.8,430.9 523.4,432.4 524.0,433.8 524.6,435.2 525.2,436.6 525.8,437.9 526.4,439.2 527.0,440.4 527.6,441.6 528.3,443.1 529.1,444.5 529.8,445.9 530.5,447.3 531.2,448.7 531.9,450.0 532.6,451.3 533.3,452.5 534.0,453.7 534.8,454.8 535.6,455.9 536.4,456.9 537.3,457.9 538.4,458.9 539.7,459.8 540.9,460.6 542.2,461.3 543.6,461.9 544.9,462.6 546.2,463.3 547.5,464.1 548.7,465.0 549.7,465.9 550.7,466.8 551.8,467.7 552.8,468.7 553.8,469.7 554.8,470.7 555.7,471.7 556.7,472.8 557.6,473.9 558.4,475.0 559.2,476.2 560.0,477.3 560.7,478.5 561.4,479.8 562.1,481.1 562.6,482.4 563.2,483.8 563.7,485.2 564.2,486.5 564.7,487.9 565.1,489.3 565.6,490.6 566.0,492.0 566.5,493.4 566.9,494.9 567.3,496.3 567.7,497.7 568.0,499.1 568.4,500.6 568.7,502.0 569.1,503.5 569.4,505.0 569.8,506.5 570.1,507.9 570.5,509.2 570.8,510.6 571.1,512.1 571.4,513.5 571.7,515.0 572.1,516.4 572.4,517.9 572.7,519.4 573.0,520.8 573.4,522.2 573.7,523.6 574.0,525.0 574.4,526.6 574.7,528.3 575.1,530.2 575.4,532.1 575.8,534.0 576.2,535.7 576.5,537.3 576.9,538.7 577.2,539.7 577.6,540.4 577.9,540.6 578.2,540.4 578.4,540.0 578.6,539.3 578.9,538.3 579.1,537.2 579.3,535.9 579.6,534.4 579.8,532.8 580.0,531.0 580.2,529.2 580.5,527.4 580.7,525.5 580.9,523.6 581.1,521.7 581.3,519.9 581.6,518.2 581.8,516.5 582.0,515.0 582.2,513.6 582.4,512.1 582.6,510.7 582.8,509.3 583.0,507.9 583.2,506.4 583.4,505.0 583.6,503.6 583.8,502.2 584.0,500.7 584.2,499.3 584.5,497.8 584.7,496.3 584.9,494.8 585.1,493.3 585.3,491.7 585.5,490.2 585.8,488.6 586.0,487.0 586.2,485.7 586.4,484.3 586.6,482.9 586.8,481.5 586.9,480.0 587.1,478.5 587.3,477.0 587.5,475.5 587.7,474.0 587.9,472.4 588.1,470.9 588.2,469.3 588.4,467.7 588.6,466.2 588.8,464.6 589.1,463.0 589.3,461.5 589.5,460.0 589.7,458.4 590.0,456.9 590.2,455.5 590.4,454.0 590.7,452.6 591.0,451.3 591.3,449.9 591.6,448.6 591.9,447.4 592.2,446.2 592.5,445.0 593.0,443.4 593.5,441.7 594.1,440.0 594.7,438.2 595.3,436.5 595.9,434.9 596.5,433.3 597.1,431.9 597.7,430.6 598.3,429.4 598.9,428.5 599.5,427.7 600.1,427.2 600.6,427.0 601.5,427.3 602.3,428.3 603.2,429.6 604.0,431.0 604.6,432.0 605.2,433.2 605.9,434.5 606.5,435.9 607.1,437.3 607.6,438.7 608.2,440.2 608.7,441.6 609.1,442.9 609.5,444.1 609.8,445.4 610.1,446.7 610.4,448.0 610.7,449.4 611.0,450.7 611.3,452.1 611.7,453.6 612.0,455.0 612.3,456.3 612.6,457.9 612.9,459.5 613.3,461.3 613.6,463.1 613.9,464.9 614.3,466.7 614.6,468.4 614.9,469.9 615.3,471.3 615.6,472.4 615.9,473.3 616.2,473.8 616.5,474.0 616.8,473.8 617.1,473.2 617.4,472.3 617.6,471.0 617.9,469.6 618.1,467.9 618.4,466.1 618.6,464.3 618.9,462.3 619.2,460.4 619.4,458.5 619.7,456.7 620.0,455.0 620.3,453.6 620.5,452.3 620.8,450.8 621.1,449.4 621.4,448.0 621.7,446.5 622.0,445.0 622.3,443.5 622.6,442.0 622.9,440.5 623.1,439.0 623.4,437.5 623.7,436.0 624.0,434.5 624.3,433.1 624.5,431.6 624.8,430.1 625.0,428.7 625.2,427.2 625.4,425.7 625.6,424.1 625.8,422.6 626.0,421.0 626.2,419.5 626.3,418.0 626.5,416.5 626.6,415.0 626.8,413.5 627.0,412.0 627.1,410.6 627.3,409.1 627.5,407.7 627.8,406.3 628.0,405.0 628.3,403.3 628.6,401.5 629.0,399.6 629.3,397.6 629.7,395.8 630.0,394.0 630.4,392.4 630.8,391.0 631.2,390.0 631.6,389.3 632.0,389.0 632.6,389.3 633.2,390.2 633.8,391.6 634.4,393.2 635.0,395.0 635.2,395.9 635.5,396.9 635.7,398.0 635.9,399.1 636.1,400.4 636.3,401.7 636.5,403.1 636.7,404.5 636.9,406.0 637.1,407.5 637.2,409.1 637.4,410.7 637.5,412.3 637.7,413.9 637.8,415.6 638.0,417.3 638.1,418.9 638.2,420.6 638.4,422.2 638.5,423.8 638.6,425.4 638.7,427.0 638.9,428.5 639.0,430.0 639.1,431.5 639.2,433.0 639.4,434.5 639.5,436.0 639.6,437.6 639.7,439.1 639.8,440.6 639.9,442.2 639.9,443.7 640.0,445.2 640.1,446.8 640.2,448.3 640.3,449.8 640.3,451.3 640.4,452.8 640.5,454.3 640.6,455.7 640.6,457.2 640.7,458.6 640.8,460.0 640.9,461.3 640.9,462.7 641.0,464.0 641.1,465.6 641.2,467.4 641.3,469.2 641.3,471.1 641.4,472.9 641.5,474.8 641.6,476.6 641.7,478.3 641.7,479.9 641.8,481.3 641.9,482.5 642.0,483.6 642.0,484.3 642.1,484.8 642.2,485.0 642.3,484.8 642.4,484.4 642.4,483.6 642.5,482.6 642.6,481.4 642.7,480.0 642.7,478.4 642.8,476.7 642.9,474.8 643.0,472.9 643.0,471.0 643.1,469.0 643.2,467.1 643.3,465.2 643.3,463.4 643.4,461.6 643.5,460.0 643.6,458.6 643.6,457.3 643.7,455.9 643.8,454.6 643.9,453.2 643.9,451.9 644.0,450.5 644.1,449.1 644.2,447.7 644.2,446.3 644.3,444.9 644.4,443.5 644.5,442.1 644.5,440.7 644.6,439.2 644.7,437.7 644.8,436.2 644.8,434.7 644.9,433.2 644.9,431.6 645.0,430.0 645.0,428.7 645.1,427.4 645.1,426.1 645.2,424.7 645.2,423.3 645.2,421.9 645.3,420.5 645.3,419.1 645.3,417.7 645.4,416.2 645.4,414.8 645.4,413.3 645.5,411.8 645.5,410.3 645.5,408.8 645.5,407.3 645.6,405.8 645.6,404.3 645.6,402.8 645.6,401.2 645.7,399.7 645.7,398.2 645.7,396.6 645.7,395.1 645.8,393.6 645.8,392.0 645.8,390.5 645.8,389.0 645.9,387.5 645.9,386.0 645.9,384.5 645.9,383.0 646.0,381.5 646.0,380.0 646.0,378.5 646.1,377.0 646.1,375.5 646.1,374.0 646.1,372.5 646.2,371.0 646.2,369.5 646.2,368.0 646.2,366.4 646.2,364.9 646.3,363.4 646.3,361.8 646.3,360.3 646.3,358.8 646.3,357.2 646.4,355.7 646.4,354.2 646.4,352.7 646.4,351.2 646.5,349.7 646.5,348.2 646.5,346.7 646.5,345.2 646.6,343.8 646.6,342.3 646.6,340.9 646.7,339.5 646.7,338.1 646.8,336.7 646.8,335.3 646.8,333.9 646.9,332.6 646.9,331.3 647.0,330.0 647.1,328.4 647.1,326.9 647.2,325.4 647.3,323.9 647.4,322.5 647.5,321.1 647.5,319.7 647.6,318.4 647.7,317.0 647.8,315.7 647.9,314.3 648.0,313.0 648.1,311.6 648.2,310.3 648.3,308.9 648.4,307.5 648.5,306.1 648.6,304.6 648.8,303.1 648.9,301.6 649.0,300.0 649.1,298.7 649.2,297.4 649.3,296.0 649.4,294.7 649.5,293.3 649.7,291.9 649.8,290.5 649.9,289.1 650.0,287.6 650.2,286.1 650.3,284.7 650.4,283.2 650.6,281.7 650.7,280.2 650.8,278.7 651.0,277.2 651.1,275.6 651.3,274.1 651.4,272.6 651.5,271.0 651.7,269.5 651.8,268.0 651.9,266.4 652.1,264.9 652.2,263.4 652.4,261.9 652.5,260.3 652.6,258.8 652.8,257.3 652.9,255.8 653.0,254.4 653.2,252.9 653.3,251.4 653.4,250.0 653.5,248.5 653.6,247.0 653.8,245.5 653.9,244.1 654.0,242.6 654.1,241.1 654.2,239.6 654.3,238.2 654.4,236.7 654.5,235.2 654.6,233.8 654.7,232.3 654.8,230.9 654.9,229.4 655.0,228.0 655.1,226.5 655.2,225.1 655.3,223.6 655.4,222.2 655.6,220.7 655.7,219.3 655.8,217.9 655.9,216.4 656.0,215.0 656.1,213.6 656.3,212.1 656.4,210.7 656.6,209.3 656.7,207.9 656.8,206.4 657.0,205.0 657.2,203.5 657.3,202.0 657.5,200.5 657.6,199.0 657.8,197.4 657.9,195.9 658.1,194.3 658.2,192.7 658.4,191.2 658.5,189.6 658.7,188.0 658.9,186.5 659.0,184.9 659.2,183.4 659.4,181.8 659.6,180.3 659.8,178.8 660.0,177.3 660.2,175.9 660.4,174.5 660.6,173.0 660.9,171.7 661.1,170.3 661.4,169.0 661.7,167.7 662.0,166.5 662.3,165.3 662.6,164.1 663.0,163.0 663.6,161.4 664.1,159.9 664.7,158.4 665.3,157.0 666.0,155.6 666.7,154.3 667.4,153.0 668.1,151.8 668.8,150.6 669.6,149.5 670.4,148.5 671.2,147.5 672.0,146.5 673.0,145.5 673.9,144.5 674.9,143.7 675.9,142.9 677.0,142.1 678.1,141.4 679.3,140.8 680.6,140.2 682.0,139.6 683.1,139.2 684.3,138.8 685.5,138.5 686.8,138.2 688.2,137.9 689.5,137.7 691.0,137.4 692.4,137.2 693.9,137.1 695.5,136.9 697.1,136.7 698.6,136.6 700.3,136.5 701.9,136.3 703.6,136.2 705.2,136.1 706.9,135.9 708.6,135.8 709.9,135.7 711.1,135.6 712.4,135.5 713.7,135.4 715.0,135.4 716.3,135.3 717.7,135.2 719.0,135.2 720.4,135.1 721.7,135.1 723.1,135.1 724.5,135.0 725.9,135.0 727.3,135.0 728.7,135.0 730.2,134.9 731.7,134.9 733.1,134.9 734.6,134.9 736.1,134.9 737.7,134.9 739.2,134.8 740.7,134.8 742.3,134.8 743.9,134.8 745.5,134.8 747.1,134.8 748.8,134.8 750.4,134.8 752.1,134.7 753.8,134.7 755.5,134.7 756.7,134.7 758.0,134.7 759.2,134.6 760.5,134.6 761.7,134.6 763.0,134.6 764.3,134.6 765.6,134.6 766.9,134.6 768.2,134.5 769.5,134.5 770.8,134.5 772.2,134.5 773.5,134.5 774.9,134.5 776.2,134.5 777.6,134.5 779.0,134.5 780.4,134.5 781.8,134.4 783.2,134.4 784.6,134.4 786.0,134.4 787.5,134.4 788.9,134.4 790.3,134.4 791.8,134.4 793.3,134.4 794.7,134.4 796.2,134.4 797.7,134.4 799.2,134.4 800.7,134.3 802.2,134.3 803.7,134.3 805.2,134.3 806.7,134.3 808.3,134.3 809.8,134.3 811.3,134.3 812.9,134.3 814.4,134.3 816.0,134.3 817.6,134.3 819.1,134.3 820.7,134.3 822.3,134.3 823.9,134.3 825.5,134.3 827.1,134.3 828.7,134.3 830.3,134.3 831.9,134.3 833.5,134.2 835.2,134.2 836.8,134.2 838.4,134.2 840.1,134.2 841.7,134.2 843.4,134.2 845.0,134.2 846.7,134.2 848.3,134.2 850.0,134.2 851.3,134.2 852.7,134.2 854.0,134.2 855.4,134.2 856.9,134.2 858.4,134.2 859.9,134.2 861.4,134.2 863.0,134.2 864.5,134.2 866.2,134.2 867.8,134.2 869.5,134.1 871.1,134.1 872.8,134.1 874.6,134.1 876.3,134.1 878.1,134.1 879.9,134.1 881.7,134.1 883.5,134.1 885.4,134.1 887.2,134.1 889.1,134.1 891.0,134.1 892.9,134.1 894.8,134.1 896.7,134.1 898.6,134.1 900.6,134.1 902.5,134.1 904.5,134.1 906.5,134.1 908.4,134.1 910.4,134.1 912.4,134.1 914.4,134.1 916.4,134.1 918.3,134.1 920.3,134.1 922.3,134.1 924.3,134.1 926.3,134.1 928.3,134.1 930.3,134.1 932.2,134.1 934.2,134.1 936.2,134.1 938.1,134.1 940.1,134.0 942.0,134.0 943.9,134.0 945.8,134.0 947.8,134.0 949.6,134.0 951.5,134.0 953.4,134.0 955.2,134.0 957.1,134.0 958.9,134.0 960.7,134.0 962.5,134.0 964.2,134.0 966.0,134.0 967.7,134.0 969.4,134.0 971.1,134.0 972.7,134.0 974.3,134.0 975.9,134.0 977.5,134.0 979.1,134.0 980.6,134.0 982.1,134.0 983.5,134.0 984.9,134.0 986.3,134.0 987.7,134.0 989.0,134.0 990.3,134.0 991.6,134.0 992.8,134.0 994.0,134.0 995.1,134.0 996.2,134.0 997.3,134.0 998.3,134.0 999.3,134.0 1000.3,134.0 1001.2,134.0 1002.0,134.0 1002.8,134.0 1003.6,134.0 1004.3,134.0 1005.0,134.0 1005.6,134.0 1006.2,134.0 1006.7,134.0 1007.2,134.0 1007.6,134.0 1008.0,134.0 1008.3,134.0 1008.5,134.0 1008.7,134.0 1008.9,134.0 1009.0,134.0 1009.0,134.0" stroke="#a27414"/><polyline points="87.0,134.0 87.0,134.0 87.1,134.0 87.3,134.0 87.5,134.0 87.7,134.0 88.0,134.0 88.4,134.0 88.8,134.0 89.3,134.0 89.8,134.0 90.4,134.0 91.0,134.0 91.7,134.0 92.4,134.0 93.1,134.0 94.0,134.0 94.8,134.0 95.7,134.0 96.7,134.0 97.6,134.0 98.7,134.0 99.7,134.0 100.9,134.0 102.0,134.0 103.2,134.0 104.4,134.0 105.7,134.0 107.0,134.0 108.3,134.0 109.7,134.0 111.1,134.0 112.5,134.0 114.0,134.0 115.5,134.0 117.0,134.0 118.6,134.0 120.2,134.0 121.8,134.0 123.5,134.0 125.1,134.0 126.8,134.0 128.5,134.0 130.3,134.0 132.0,134.0 133.8,134.0 135.6,134.0 137.5,134.0 139.3,134.0 141.2,134.0 143.1,134.0 145.0,134.0 146.9,134.0 148.8,134.0 150.8,134.0 152.7,134.0 154.7,134.0 156.7,134.0 158.7,134.0 160.7,134.0 162.7,134.0 164.8,134.0 166.8,134.0 168.8,134.0 170.9,134.0 172.9,134.0 175.0,134.0 177.0,134.0 179.1,134.0 181.2,134.0 183.2,134.0 185.3,134.0 187.4,134.0 189.4,134.0 191.5,134.0 193.6,134.0 195.6,134.0 197.7,134.0 199.7,134.0 201.7,134.0 203.8,134.0 205.8,134.0 207.8,134.0 209.8,134.0 211.8,134.0 213.8,134.0 215.7,134.0 217.7,134.0 219.6,134.0 221.6,134.0 223.5,134.0 225.4,134.0 227.3,134.0 229.1,134.0 231.0,134.1 232.8,134.1 234.6,134.1 236.4,134.1 238.1,134.1 239.8,134.1 241.6,134.1 243.2,134.1 244.9,134.1 246.5,134.1 248.1,134.1 249.7,134.1 251.2,134.1 252.8,134.1 254.3,134.1 255.7,134.1 257.1,134.2 258.5,134.2 259.9,134.2 261.2,134.2 262.5,134.2 263.7,134.2 264.9,134.2 266.1,134.2 267.2,134.2 268.3,134.2 269.4,134.2 270.4,134.3 271.4,134.3 272.3,134.3 273.2,134.3 274.0,134.3 276.0,134.3 277.9,134.4 279.6,134.4 281.1,134.4 282.6,134.5 284.0,134.5 285.3,134.6 286.5,134.6 287.7,134.7 288.9,134.7 290.1,134.7 291.3,134.8 292.5,134.8 293.8,134.9 295.2,134.9 296.7,134.9 298.3,135.0 300.0,135.0 301.2,135.0 302.3,135.0 303.6,135.0 304.9,135.1 306.2,135.1 307.5,135.1 308.9,135.1 310.3,135.1 311.8,135.1 313.3,135.1 314.8,135.1 316.3,135.1 317.9,135.1 319.5,135.1 321.1,135.1 322.7,135.1 324.3,135.1 325.9,135.1 327.6,135.1 329.2,135.1 330.9,135.1 332.6,135.1 334.2,135.1 335.9,135.1 337.6,135.1 339.3,135.1 340.9,135.1 342.6,135.1 344.2,135.1 345.9,135.1 347.5,135.1 349.1,135.1 350.7,135.1 352.3,135.1 353.8,135.1 355.3,135.1 356.8,135.1 358.3,135.2 359.7,135.2 361.2,135.2 362.5,135.2 363.9,135.2 365.2,135.3 366.5,135.3 367.7,135.3 368.9,135.4 370.0,135.4 371.8,135.5 373.6,135.5 375.3,135.6 377.0,135.7 378.6,135.8 380.2,135.9 381.7,136.0 383.2,136.1 384.6,136.2 386.1,136.3 387.4,136.4 388.8,136.5 390.1,136.6 391.4,136.7 392.6,136.8 393.8,136.9 395.0,137.0 396.6,137.1 398.1,137.1 399.5,137.2 400.8,137.2 402.1,137.3 403.4,137.4 404.7,137.5 406.0,137.7 407.4,137.9 408.9,138.2 410.3,138.5 411.7,138.9 413.1,139.3 414.4,139.7 415.7,140.2 417.0,140.8 418.2,141.4 419.4,142.0 420.6,142.7 421.7,143.4 422.7,144.2 423.7,145.0 424.6,145.9 425.4,146.8 426.2,147.8 427.0,149.0 427.6,150.0 428.3,151.1 429.0,152.2 429.7,153.5 430.3,154.7 431.0,156.1 431.6,157.4 432.2,158.7 432.7,160.0 433.2,161.2 433.7,162.5 434.0,163.8 434.4,165.1 434.7,166.4 435.0,167.7 435.2,169.0 435.5,170.3 435.8,171.7 436.1,173.0 436.4,174.4 436.7,175.8 436.9,177.2 437.2,178.6 437.5,180.1 437.8,181.5 438.0,182.9 438.3,184.3 438.5,185.7 438.7,187.1 438.9,188.3 439.1,189.5 439.3,190.8 439.5,192.0 439.6,193.3 439.8,194.7 440.0,196.3 440.2,198.0 440.3,199.0 440.4,200.0 440.5,201.2 440.7,202.3 440.8,203.5 440.9,204.8 441.0,206.1 441.2,207.4 441.3,208.8 441.4,210.3 441.6,211.7 441.7,213.2 441.9,214.7 442.0,216.2 442.1,217.8 442.3,219.4 442.4,221.0 442.6,222.6 442.7,224.2 442.9,225.9 443.0,227.5 443.2,229.1 443.3,230.8 443.4,232.4 443.6,234.0 443.7,235.7 443.9,237.3 444.0,238.9 444.2,240.4 444.3,242.0 444.4,243.5 444.6,245.0 444.7,246.5 444.9,248.0 445.0,249.4 445.1,250.9 445.3,252.5 445.4,254.0 445.6,255.5 445.8,256.9 445.9,258.4 446.1,259.9 446.2,261.4 446.4,262.8 446.5,264.3 446.7,265.7 446.8,267.2 447.0,268.6 447.1,270.1 447.3,271.5 447.4,272.9 447.6,274.4 447.7,275.8 447.9,277.3 448.0,278.7 448.2,280.2 448.3,281.6 448.4,283.1 448.6,284.6 448.7,286.0 448.8,287.5 449.0,289.0 449.1,290.5 449.2,292.0 449.3,293.4 449.4,294.9 449.5,296.3 449.6,297.8 449.7,299.2 449.8,300.7 449.9,302.2 450.0,303.7 450.1,305.3 450.2,306.8 450.3,308.3 450.4,309.8 450.5,311.3 450.6,312.9 450.6,314.4 450.7,315.9 450.8,317.4 450.9,318.9 451.0,320.4 451.0,321.9 451.1,323.4 451.2,324.9 451.3,326.4 451.3,327.8 451.4,329.3 451.5,330.7 451.6,332.1 451.6,333.4 451.7,334.8 451.8,336.1 451.9,337.5 451.9,338.7 452.0,340.0 452.1,341.6 452.2,343.2 452.3,344.7 452.4,346.1 452.4,347.6 452.5,349.0 452.6,350.4 452.7,351.8 452.8,353.1 452.9,354.5 452.9,355.8 453.0,357.2 453.1,358.5 453.2,359.9 453.2,361.3 453.3,362.7 453.4,364.1 453.4,365.5 453.5,367.0 453.6,368.4 453.6,369.8 453.7,371.2 453.7,372.6 453.8,374.0 453.8,375.4 453.9,376.8 453.9,378.3 454.0,379.7 454.0,381.2 454.1,382.7 454.1,384.1 454.1,385.6 454.2,387.0 454.2,388.5 454.3,390.0 454.3,391.4 454.3,392.9 454.4,394.3 454.4,395.7 454.4,397.2 454.5,398.6 454.5,400.0 454.5,401.5 454.6,402.9 454.6,404.4 454.6,405.9 454.6,407.4 454.6,408.9 454.6,410.3 454.7,411.8 454.7,413.3 454.7,414.7 454.7,416.2 454.7,417.6 454.7,419.1 454.7,420.5 454.8,421.9 454.8,423.3 454.8,424.7 454.9,426.0 454.9,427.4 454.9,428.7 455.0,430.0 455.1,431.6 455.1,433.4 455.2,435.3 455.3,437.2 455.4,439.1 455.5,440.9 455.6,442.7 455.7,444.4 455.8,446.0 455.9,447.3 456.0,448.4 456.2,449.3 456.3,449.8 456.5,450.0 456.7,449.7 456.9,448.9 457.2,447.7 457.4,446.1 457.7,444.3 458.0,442.4 458.3,440.5 458.6,438.7 459.0,437.0 459.3,435.6 459.7,434.0 460.1,432.3 460.5,430.5 460.9,428.6 461.3,426.8 461.8,425.0 462.2,423.4 462.7,422.0 463.1,420.7 463.5,419.8 463.9,419.2 464.3,419.0 464.7,419.2 465.1,419.9 465.5,421.0 465.9,422.3 466.2,423.9 466.6,425.6 467.0,427.5 467.3,429.4 467.7,431.2 468.0,433.0 468.2,434.2 468.5,435.5 468.7,436.8 468.9,438.1 469.2,439.5 469.4,440.9 469.6,442.3 469.8,443.8 470.0,445.3 470.2,446.8 470.4,448.3 470.7,449.9 470.9,451.5 471.1,453.0 471.3,454.6 471.4,456.2 471.6,457.8 471.8,459.3 472.0,460.9 472.2,462.5 472.4,464.0 472.6,465.4 472.7,466.8 472.9,468.2 473.0,469.6 473.2,471.1 473.4,472.5 473.5,474.0 473.6,475.5 473.8,476.9 473.9,478.4 474.1,479.9 474.2,481.3 474.4,482.8 474.5,484.3 474.6,485.7 474.8,487.2 474.9,488.7 475.0,490.1 475.2,491.6 475.3,493.0 475.5,494.4 475.6,495.8 475.7,497.2 475.9,498.6 476.0,500.0 476.2,501.6 476.3,503.3 476.5,505.1 476.6,506.9 476.8,508.8 476.9,510.8 477.1,512.7 477.2,514.6 477.4,516.5 477.5,518.3 477.7,520.1 477.8,521.7 478.0,523.3 478.1,524.7 478.3,525.9 478.4,527.0 478.6,527.8 478.7,528.5 478.9,528.9 479.0,529.0 479.1,528.9 479.3,528.5 479.4,527.8 479.6,526.9 479.7,525.8 479.9,524.6 480.0,523.2 480.2,521.6 480.3,519.9 480.5,518.2 480.6,516.3 480.8,514.4 480.9,512.5 481.1,510.6 481.2,508.6 481.4,506.8 481.5,504.9 481.7,503.2 481.8,501.5 482.0,500.0 482.2,498.6 482.3,497.2 482.5,495.8 482.6,494.4 482.8,493.0 483.0,491.6 483.1,490.2 483.3,488.8 483.5,487.4 483.6,486.0 483.8,484.6 484.0,483.2 484.1,481.8 484.3,480.4 484.5,478.9 484.6,477.5 484.8,476.0 484.9,474.5 485.1,473.0 485.2,471.5 485.4,470.0 485.5,468.6 485.6,467.2 485.8,465.8 485.9,464.3 486.0,462.9 486.1,461.4 486.1,459.8 486.2,458.3 486.3,456.8 486.4,455.2 486.5,453.7 486.6,452.1 486.6,450.5 486.7,449.0 486.8,447.4 486.9,445.9 487.0,444.3 487.1,442.8 487.2,441.3 487.4,439.8 487.5,438.3 487.6,436.8 487.8,435.4 487.9,434.0 488.1,432.6 488.3,431.3 488.5,430.0 488.7,428.7 489.0,427.1 489.3,425.4 489.6,423.8 489.9,422.2 490.3,420.6 490.6,419.0 490.9,417.5 491.3,415.9 491.7,414.5 492.1,413.1 492.5,411.7 493.0,410.4 493.5,409.2 493.9,408.1 494.5,407.0 495.0,406.0 495.8,404.7 496.7,403.4 497.7,402.2 498.6,401.1 499.6,400.3 500.6,399.8 501.6,399.5 502.7,399.6 503.8,400.1 504.9,400.9 505.9,401.8 507.0,402.9 508.0,404.0 508.8,405.0 509.6,406.0 510.3,407.2 510.9,408.4 511.6,409.7 512.3,411.1 513.0,412.5 513.8,414.1 514.6,415.7 515.1,416.7 515.6,417.8 516.2,419.0 516.7,420.2 517.2,421.5 517.8,422.9 518.4,424.3 518.9,425.7 519.5,427.2 520.1,428.7 520.7,430.2 521.3,431.7 521.9,433.3 522.6,434.8 523.2,436.3 523.9,437.8 524.5,439.3 525.2,440.8 525.9,442.3 526.6,443.7 527.3,445.0 528.0,446.4 528.7,447.6 529.5,448.8 530.2,449.9 531.0,451.0 532.0,452.2 533.0,453.4 534.1,454.5 535.2,455.6 536.4,456.6 537.5,457.6 538.7,458.6 539.9,459.5 541.1,460.3 542.3,461.2 543.4,462.0 544.5,462.8 545.6,463.6 546.7,464.4 547.7,465.2 548.7,466.0 549.9,467.0 551.2,467.8 552.4,468.7 553.5,469.4 554.6,470.2 555.7,471.0 556.7,471.9 557.6,472.9 558.4,474.0 559.0,475.1 559.5,476.2 560.0,477.4 560.4,478.7 560.7,480.1 561.0,481.4 561.2,482.8 561.5,484.3 561.7,485.7 562.0,487.1 562.2,488.6 562.5,490.0 562.8,491.3 563.1,492.7 563.3,494.0 563.6,495.4 563.8,496.8 564.1,498.2 564.3,499.6 564.6,501.0 564.8,502.4 565.0,503.9 565.3,505.4 565.5,506.9 565.8,508.4 566.0,510.0 566.2,511.3 566.4,512.6 566.6,514.0 566.8,515.3 567.1,516.7 567.3,518.1 567.5,519.5 567.7,520.9 567.9,522.3 568.1,523.7 568.4,525.2 568.6,526.7 568.8,528.1 569.0,529.7 569.2,531.2 569.4,532.8 569.6,534.4 569.8,536.0 570.0,537.6 570.1,539.3 570.3,541.0 570.4,542.3 570.5,543.5 570.6,544.8 570.8,546.2 570.9,547.5 571.0,548.9 571.1,550.3 571.2,551.7 571.3,553.1 571.4,554.6 571.5,556.1 571.5,557.5 571.6,559.0 571.7,560.5 571.8,562.1 571.9,563.6 572.0,565.1 572.0,566.7 572.1,568.2 572.2,569.8 572.3,571.3 572.4,572.9 572.4,574.5 572.5,576.0 572.6,577.6 572.7,579.1 572.7,580.7 572.8,582.2 572.9,583.8 572.9,585.3 573.0,586.8 573.1,588.4 573.2,589.9 573.2,591.4 573.3,592.8 573.4,594.3 573.5,595.8 573.5,597.2 573.6,598.6 573.7,600.0 573.8,601.6 573.9,603.3 574.0,605.1 574.1,606.9 574.1,608.7 574.2,610.7 574.3,612.6 574.4,614.5 574.5,616.5 574.6,618.5 574.7,620.5 574.8,622.4 574.8,624.4 574.9,626.3 575.0,628.2 575.1,630.0 575.2,631.8 575.3,633.5 575.4,635.1 575.4,636.7 575.5,638.2 575.6,639.5 575.7,640.8 575.8,642.0 575.9,643.0 576.0,643.9 576.0,644.6 576.1,645.2 576.2,645.6 576.3,645.9 576.4,646.0 576.5,645.9 576.6,645.6 576.7,645.2 576.8,644.6 576.9,643.9 577.0,643.0 577.1,642.0 577.2,640.8 577.3,639.5 577.4,638.2 577.5,636.7 577.6,635.1 577.7,633.5 577.8,631.8 577.9,630.0 578.0,628.2 578.1,626.3 578.2,624.4 578.3,622.5 578.4,620.5 578.5,618.5 578.6,616.5 578.7,614.6 578.8,612.6 578.8,610.7 578.9,608.8 579.0,606.9 579.1,605.1 579.2,603.3 579.2,601.6 579.3,600.0 579.4,598.6 579.4,597.2 579.4,595.8 579.5,594.3 579.5,592.8 579.6,591.4 579.6,589.9 579.6,588.4 579.6,586.9 579.7,585.3 579.7,583.8 579.7,582.2 579.7,580.7 579.7,579.1 579.8,577.6 579.8,576.0 579.8,574.5 579.8,572.9 579.8,571.3 579.8,569.8 579.8,568.2 579.8,566.7 579.9,565.1 579.9,563.6 579.9,562.1 579.9,560.5 579.9,559.0 579.9,557.5 580.0,556.1 580.0,554.6 580.0,553.1 580.0,551.7 580.1,550.3 580.1,548.9 580.1,547.5 580.2,546.2 580.2,544.8 580.3,543.5 580.3,542.3 580.4,541.0 580.5,539.3 580.6,537.6 580.7,536.0 580.8,534.4 580.9,532.8 581.0,531.3 581.1,529.8 581.2,528.3 581.4,526.8 581.5,525.3 581.6,523.9 581.7,522.4 581.9,521.0 582.0,519.6 582.1,518.2 582.3,516.8 582.4,515.5 582.6,514.1 582.7,512.7 582.9,511.4 583.0,510.0 583.2,508.5 583.3,507.0 583.5,505.6 583.7,504.2 583.8,502.8 584.0,501.4 584.2,500.1 584.4,498.7 584.5,497.3 584.7,496.0 584.9,494.6 585.1,493.1 585.3,491.7 585.5,490.2 585.8,488.6 586.0,487.0 586.2,485.7 586.4,484.4 586.5,483.1 586.7,481.7 586.9,480.3 587.1,478.8 587.2,477.3 587.4,475.8 587.6,474.3 587.8,472.7 588.0,471.2 588.2,469.6 588.4,468.0 588.6,466.4 588.8,464.8 589.0,463.3 589.2,461.7 589.4,460.1 589.7,458.6 589.9,457.1 590.2,455.6 590.4,454.1 590.7,452.7 591.0,451.3 591.3,449.9 591.5,448.6 591.9,447.4 592.2,446.2 592.5,445.0 593.0,443.4 593.5,441.7 594.1,439.9 594.7,438.2 595.3,436.5 595.9,434.9 596.5,433.3 597.1,431.8 597.8,430.5 598.4,429.4 599.0,428.4 599.5,427.7 600.1,427.2 600.6,427.0 601.3,427.3 602.0,428.0 602.7,429.2 603.4,430.6 604.0,432.0 604.4,433.0 604.8,434.1 605.2,435.3 605.6,436.5 606.0,437.8 606.4,439.2 606.7,440.7 607.1,442.2 607.4,443.7 607.8,445.3 608.1,446.8 608.4,448.4 608.7,450.0 608.9,451.2 609.1,452.5 609.3,453.8 609.5,455.1 609.7,456.4 609.8,457.7 610.0,459.0 610.2,460.4 610.3,461.8 610.4,463.2 610.6,464.6 610.7,466.0 610.8,467.5 611.0,469.0 611.1,470.5 611.2,472.0 611.4,473.5 611.5,475.1 611.7,476.7 611.8,478.3 612.0,480.0 612.1,481.3 612.3,482.7 612.4,484.1 612.5,485.7 612.7,487.3 612.8,489.0 612.9,490.7 613.1,492.5 613.2,494.4 613.3,496.2 613.5,498.2 613.6,500.1 613.8,502.1 613.9,504.1 614.1,506.1 614.2,508.1 614.4,510.1 614.5,512.0 614.6,514.0 614.8,515.9 614.9,517.8 615.1,519.7 615.2,521.5 615.4,523.3 615.5,525.0 615.7,526.7 615.8,528.3 615.9,529.8 616.1,531.2 616.2,532.5 616.4,533.8 616.5,534.9 616.6,535.9 616.8,536.8 616.9,537.6 617.0,538.3 617.1,538.8 617.3,539.2 617.4,539.4 617.5,539.5 617.6,539.4 617.7,539.2 617.9,538.8 618.0,538.2 618.1,537.5 618.2,536.7 618.3,535.7 618.4,534.7 618.5,533.5 618.6,532.2 618.7,530.8 618.8,529.3 618.9,527.8 619.0,526.2 619.1,524.5 619.2,522.7 619.3,520.9 619.4,519.1 619.5,517.2 619.6,515.3 619.7,513.4 619.8,511.5 619.9,509.5 620.0,507.6 620.1,505.7 620.2,503.8 620.3,501.9 620.4,500.0 620.5,498.2 620.6,496.4 620.7,494.7 620.8,493.1 620.9,491.5 621.0,490.0 621.1,488.5 621.2,487.0 621.3,485.6 621.4,484.1 621.6,482.5 621.7,481.0 621.8,479.5 621.9,478.0 622.0,476.5 622.1,474.9 622.3,473.4 622.4,471.9 622.5,470.3 622.6,468.8 622.7,467.3 622.9,465.7 623.0,464.2 623.1,462.7 623.2,461.2 623.3,459.7 623.5,458.2 623.6,456.7 623.7,455.2 623.8,453.8 623.9,452.3 624.1,450.9 624.2,449.5 624.3,448.1 624.4,446.7 624.5,445.3 624.7,443.9 624.8,442.6 624.9,441.3 625.0,440.0 625.1,438.4 625.3,436.8 625.4,435.2 625.5,433.7 625.7,432.1 625.8,430.6 625.9,429.1 626.0,427.6 626.2,426.2 626.3,424.7 626.4,423.3 626.5,421.8 626.7,420.4 626.8,419.1 627.0,417.7 627.1,416.4 627.3,415.1 627.4,413.8 627.6,412.5 627.8,411.2 628.0,410.0 628.3,408.3 628.6,406.5 628.9,404.6 629.2,402.7 629.5,400.9 629.9,399.1 630.2,397.5 630.6,396.0 630.9,394.8 631.3,393.9 631.6,393.2 632.0,393.0 632.5,393.3 633.0,394.0 633.5,395.2 634.0,396.6 634.5,398.3 635.0,400.0 635.2,400.9 635.4,401.8 635.6,402.8 635.8,403.9 635.9,405.0 636.1,406.2 636.3,407.5 636.4,408.8 636.6,410.2 636.7,411.6 636.8,413.0 637.0,414.5 637.1,416.1 637.2,417.6 637.4,419.2 637.5,420.8 637.6,422.5 637.7,424.1 637.8,425.8 637.9,427.4 638.0,429.1 638.1,430.7 638.2,432.4 638.3,434.1 638.4,435.7 638.5,437.3 638.6,438.9 638.7,440.5 638.8,442.0 638.9,443.5 639.0,445.0 639.1,446.5 639.2,447.9 639.3,449.4 639.4,450.8 639.4,452.3 639.5,453.8 639.6,455.2 639.7,456.7 639.7,458.2 639.8,459.6 639.9,461.1 639.9,462.6 640.0,464.1 640.1,465.5 640.1,467.0 640.2,468.5 640.2,469.9 640.3,471.4 640.3,472.9 640.4,474.3 640.5,475.8 640.5,477.2 640.6,478.7 640.6,480.1 640.7,481.5 640.7,483.0 640.8,484.4 640.8,485.8 640.9,487.2 640.9,488.6 641.0,490.0 641.1,491.6 641.1,493.2 641.2,495.0 641.3,496.8 641.3,498.6 641.4,500.5 641.4,502.5 641.5,504.4 641.6,506.4 641.6,508.3 641.7,510.2 641.7,512.1 641.8,514.0 641.8,515.7 641.9,517.4 642.0,519.1 642.0,520.6 642.1,522.0 642.1,523.3 642.2,524.5 642.2,525.5 642.3,526.4 642.3,527.1 642.4,527.6 642.4,527.9 642.5,528.0 642.5,527.9 642.6,527.7 642.6,527.2 642.7,526.7 642.7,526.0 642.8,525.1 642.8,524.2 642.8,523.1 642.9,521.9 642.9,520.6 643.0,519.1 643.0,517.7 643.0,516.1 643.1,514.4 643.1,512.7 643.2,511.0 643.2,509.1 643.2,507.3 643.3,505.4 643.3,503.5 643.4,501.6 643.4,499.6 643.4,497.7 643.5,495.8 643.5,493.8 643.5,491.9 643.6,490.1 643.6,488.3 643.7,486.5 643.7,484.8 643.7,483.1 643.8,481.5 643.8,480.0 643.8,478.5 643.9,477.1 643.9,475.6 643.9,474.2 644.0,472.7 644.0,471.2 644.1,469.8 644.1,468.3 644.1,466.8 644.2,465.4 644.2,463.9 644.2,462.4 644.3,461.0 644.3,459.5 644.3,458.0 644.4,456.5 644.4,455.1 644.5,453.6 644.5,452.1 644.5,450.6 644.6,449.2 644.6,447.7 644.6,446.2 644.7,444.7 644.7,443.3 644.7,441.8 644.8,440.3 644.8,438.8 644.8,437.4 644.9,435.9 644.9,434.4 644.9,432.9 645.0,431.5 645.0,430.0 645.0,428.5 645.1,427.1 645.1,425.6 645.1,424.1 645.2,422.6 645.2,421.2 645.2,419.7 645.2,418.2 645.3,416.8 645.3,415.3 645.3,413.8 645.4,412.4 645.4,410.9 645.4,409.4 645.5,407.9 645.5,406.5 645.5,405.0 645.5,403.5 645.6,402.1 645.6,400.6 645.6,399.1 645.7,397.6 645.7,396.2 645.7,394.7 645.7,393.2 645.8,391.8 645.8,390.3 645.8,388.8 645.9,387.4 645.9,385.9 645.9,384.4 645.9,382.9 646.0,381.5 646.0,380.0 646.0,378.5 646.1,377.0 646.1,375.5 646.1,374.0 646.1,372.5 646.2,371.0 646.2,369.5 646.2,368.0 646.2,366.4 646.2,364.9 646.3,363.4 646.3,361.8 646.3,360.3 646.3,358.8 646.3,357.2 646.4,355.7 646.4,354.2 646.4,352.7 646.4,351.2 646.5,349.7 646.5,348.2 646.5,346.7 646.5,345.2 646.6,343.8 646.6,342.3 646.6,340.9 646.7,339.5 646.7,338.1 646.8,336.7 646.8,335.3 646.8,333.9 646.9,332.6 646.9,331.3 647.0,330.0 647.1,328.4 647.1,326.9 647.2,325.4 647.3,323.9 647.4,322.5 647.5,321.1 647.5,319.7 647.6,318.4 647.7,317.0 647.8,315.7 647.9,314.3 648.0,313.0 648.1,311.6 648.2,310.3 648.3,308.9 648.4,307.5 648.5,306.1 648.6,304.6 648.8,303.1 648.9,301.6 649.0,300.0 649.1,298.7 649.2,297.4 649.3,296.0 649.4,294.7 649.5,293.3 649.7,291.9 649.8,290.5 649.9,289.1 650.0,287.6 650.2,286.1 650.3,284.7 650.4,283.2 650.6,281.7 650.7,280.2 650.8,278.7 651.0,277.2 651.1,275.6 651.3,274.1 651.4,272.6 651.5,271.0 651.7,269.5 651.8,268.0 651.9,266.4 652.1,264.9 652.2,263.4 652.4,261.9 652.5,260.3 652.6,258.8 652.8,257.3 652.9,255.8 653.0,254.4 653.2,252.9 653.3,251.4 653.4,250.0 653.5,248.5 653.6,247.0 653.8,245.5 653.9,244.1 654.0,242.6 654.1,241.1 654.2,239.6 654.3,238.2 654.4,236.7 654.5,235.2 654.6,233.8 654.7,232.3 654.8,230.9 654.9,229.4 655.0,228.0 655.1,226.5 655.2,225.1 655.3,223.6 655.4,222.2 655.6,220.7 655.7,219.3 655.8,217.9 655.9,216.4 656.0,215.0 656.1,213.6 656.3,212.1 656.4,210.7 656.6,209.3 656.7,207.9 656.8,206.4 657.0,205.0 657.2,203.5 657.3,202.0 657.5,200.5 657.6,199.0 657.8,197.4 657.9,195.9 658.1,194.3 658.2,192.7 658.4,191.2 658.5,189.6 658.7,188.0 658.9,186.5 659.0,184.9 659.2,183.4 659.4,181.8 659.6,180.3 659.8,178.8 660.0,177.3 660.2,175.9 660.4,174.5 660.6,173.0 660.9,171.7 661.1,170.3 661.4,169.0 661.7,167.7 662.0,166.5 662.3,165.3 662.6,164.1 663.0,163.0 663.6,161.4 664.1,159.9 664.7,158.4 665.3,157.0 666.0,155.6 666.7,154.3 667.4,153.0 668.1,151.8 668.8,150.6 669.6,149.5 670.4,148.5 671.2,147.5 672.0,146.5 673.0,145.5 673.9,144.5 674.9,143.7 675.9,142.9 677.0,142.1 678.1,141.4 679.3,140.8 680.6,140.2 682.0,139.6 683.1,139.2 684.3,138.8 685.5,138.5 686.8,138.2 688.2,137.9 689.5,137.7 691.0,137.4 692.4,137.2 693.9,137.1 695.5,136.9 697.1,136.7 698.6,136.6 700.3,136.5 701.9,136.3 703.6,136.2 705.2,136.1 706.9,135.9 708.6,135.8 709.9,135.7 711.1,135.6 712.4,135.5 713.7,135.4 715.0,135.4 716.3,135.3 717.7,135.2 719.0,135.2 720.4,135.1 721.7,135.1 723.1,135.1 724.5,135.0 725.9,135.0 727.3,135.0 728.7,135.0 730.2,134.9 731.7,134.9 733.1,134.9 734.6,134.9 736.1,134.9 737.7,134.9 739.2,134.8 740.7,134.8 742.3,134.8 743.9,134.8 745.5,134.8 747.1,134.8 748.8,134.8 750.4,134.8 752.1,134.7 753.8,134.7 755.5,134.7 756.7,134.7 758.0,134.7 759.2,134.6 760.5,134.6 761.7,134.6 763.0,134.6 764.3,134.6 765.6,134.6 766.9,134.6 768.2,134.5 769.5,134.5 770.8,134.5 772.2,134.5 773.5,134.5 774.9,134.5 776.2,134.5 777.6,134.5 779.0,134.5 780.4,134.5 781.8,134.4 783.2,134.4 784.6,134.4 786.0,134.4 787.5,134.4 788.9,134.4 790.3,134.4 791.8,134.4 793.3,134.4 794.7,134.4 796.2,134.4 797.7,134.4 799.2,134.4 800.7,134.3 802.2,134.3 803.7,134.3 805.2,134.3 806.7,134.3 808.3,134.3 809.8,134.3 811.3,134.3 812.9,134.3 814.4,134.3 816.0,134.3 817.6,134.3 819.1,134.3 820.7,134.3 822.3,134.3 823.9,134.3 825.5,134.3 827.1,134.3 828.7,134.3 830.3,134.3 831.9,134.3 833.5,134.2 835.2,134.2 836.8,134.2 838.4,134.2 840.1,134.2 841.7,134.2 843.4,134.2 845.0,134.2 846.7,134.2 848.3,134.2 850.0,134.2 851.3,134.2 852.7,134.2 854.0,134.2 855.4,134.2 856.9,134.2 858.4,134.2 859.9,134.2 861.4,134.2 863.0,134.2 864.5,134.2 866.2,134.2 867.8,134.2 869.5,134.1 871.1,134.1 872.8,134.1 874.6,134.1 876.3,134.1 878.1,134.1 879.9,134.1 881.7,134.1 883.5,134.1 885.4,134.1 887.2,134.1 889.1,134.1 891.0,134.1 892.9,134.1 894.8,134.1 896.7,134.1 898.6,134.1 900.6,134.1 902.5,134.1 904.5,134.1 906.5,134.1 908.4,134.1 910.4,134.1 912.4,134.1 914.4,134.1 916.4,134.1 918.3,134.1 920.3,134.1 922.3,134.1 924.3,134.1 926.3,134.1 928.3,134.1 930.3,134.1 932.2,134.1 934.2,134.1 936.2,134.1 938.1,134.1 940.1,134.0 942.0,134.0 943.9,134.0 945.8,134.0 947.8,134.0 949.6,134.0 951.5,134.0 953.4,134.0 955.2,134.0 957.1,134.0 958.9,134.0 960.7,134.0 962.5,134.0 964.2,134.0 966.0,134.0 967.7,134.0 969.4,134.0 971.1,134.0 972.7,134.0 974.3,134.0 975.9,134.0 977.5,134.0 979.1,134.0 980.6,134.0 982.1,134.0 983.5,134.0 984.9,134.0 986.3,134.0 987.7,134.0 989.0,134.0 990.3,134.0 991.6,134.0 992.8,134.0 994.0,134.0 995.1,134.0 996.2,134.0 997.3,134.0 998.3,134.0 999.3,134.0 1000.3,134.0 1001.2,134.0 1002.0,134.0 1002.8,134.0 1003.6,134.0 1004.3,134.0 1005.0,134.0 1005.6,134.0 1006.2,134.0 1006.7,134.0 1007.2,134.0 1007.6,134.0 1008.0,134.0 1008.3,134.0 1008.5,134.0 1008.7,134.0 1008.9,134.0 1009.0,134.0 1009.0,134.0" stroke="#40f840"/><polyline points="390.1,136.6 391.4,136.7 392.6,136.8 393.8,136.9 395.0,137.0 396.6,137.1 398.1,137.1 399.5,137.2 400.8,137.2 402.1,137.3 403.4,137.4 404.7,137.5 406.0,137.7 407.4,137.9 408.9,138.2 410.3,138.5 411.7,138.9 413.1,139.3 414.4,139.7 415.7,140.2 417.0,140.8 418.2,141.4 419.4,142.0 420.6,142.7 421.7,143.4 422.7,144.2 423.7,145.0 424.6,145.9 425.4,146.8 426.2,147.8 427.0,149.0 427.6,150.0 428.3,151.1 429.0,152.2 429.7,153.5 430.3,154.7 431.0,156.1 431.6,157.4 432.2,158.7 432.7,160.0 433.2,161.2 433.7,162.5 434.0,163.8 434.4,165.1 434.7,166.4 435.0,167.7 435.2,169.0 435.5,170.3 435.8,171.7 436.1,173.0 436.4,174.4 436.7,175.8 436.9,177.2 437.2,178.6 437.5,180.1 437.8,181.5 438.0,182.9 438.3,184.3 438.5,185.7 438.7,187.1 438.9,188.3 439.1,189.5 439.3,190.8 439.5,192.0 439.6,193.3 439.8,194.7 440.0,196.3 440.2,198.0 440.3,199.0 440.4,200.0 440.5,201.2 440.7,202.3 440.8,203.5 440.9,204.8 441.0,206.1 441.2,207.4 441.3,208.8 441.4,210.3 441.6,211.7 441.7,213.2 441.9,214.7 442.0,216.2 442.1,217.8 442.3,219.4 442.4,221.0 442.6,222.6 442.7,224.2 442.9,225.9 443.0,227.5 443.2,229.1 443.3,230.8 443.4,232.4 443.6,234.0 443.7,235.7 443.9,237.3 444.0,238.9 444.2,240.4 444.3,242.0 444.4,243.5 444.6,245.0 444.7,246.5 444.9,248.0 445.0,249.4 445.1,250.9 445.3,252.5 445.4,254.0 445.6,255.5 445.8,256.9 445.9,258.4 446.1,259.9 446.2,261.4 446.4,262.8 446.5,264.3 446.7,265.7 446.8,267.2 447.0,268.6 447.1,270.1 447.3,271.5 447.4,272.9 447.6,274.4 447.7,275.8 447.9,277.3 448.0,278.7 448.2,280.2 448.3,281.6 448.4,283.1 448.6,284.6 448.7,286.0 448.8,287.5 449.0,289.0 449.1,290.5 449.2,292.0 449.3,293.4 449.4,294.9 449.5,296.3 449.6,297.8 449.7,299.2 449.8,300.7 449.9,302.2 450.0,303.7 450.1,305.3 450.2,306.8 450.3,308.3 450.4,309.8 450.5,311.3 450.6,312.9 450.6,314.4 450.7,315.9 450.8,317.4 450.9,318.9 451.0,320.4 451.0,321.9 451.1,323.4 451.2,324.9 451.3,326.4 451.3,327.8 451.4,329.3 451.5,330.7 451.6,332.1 451.6,333.4 451.7,334.8 451.8,336.1 451.9,337.5 451.9,338.7 452.0,340.0 452.1,341.6 452.2,343.2 452.3,344.7 452.4,346.1 452.4,347.6 452.5,349.0 452.6,350.4 452.7,351.8 452.8,353.1 452.9,354.5 452.9,355.8 453.0,357.2 453.1,358.5 453.2,359.9 453.2,361.3 453.3,362.7 453.4,364.1 453.4,365.5 453.5,367.0 453.6,368.4 453.6,369.7 453.7,371.1 453.7,372.5 453.8,373.9 453.8,375.3 453.9,376.7 453.9,378.1 454.0,379.5" stroke="#a27414" stroke-dasharray="2 6"/><polyline points="645.0,430.0 645.0,428.7 645.1,427.4 645.1,426.1 645.2,424.7 645.2,423.3 645.2,421.9 645.3,420.5 645.3,419.1 645.3,417.7 645.4,416.2 645.4,414.8 645.4,413.3 645.5,411.8 645.5,410.3 645.5,408.8 645.5,407.3 645.6,405.8 645.6,404.3 645.6,402.8 645.6,401.2 645.7,399.7 645.7,398.2 645.7,396.6 645.7,395.1 645.8,393.6 645.8,392.0 645.8,390.5 645.8,389.0 645.9,387.5 645.9,386.0 645.9,384.5 645.9,383.0 646.0,381.5 646.0,380.0 646.0,378.5 646.1,377.0 646.1,375.5 646.1,374.0 646.1,372.5 646.2,371.0 646.2,369.5 646.2,368.0 646.2,366.4 646.2,364.9 646.3,363.4 646.3,361.8 646.3,360.3 646.3,358.8 646.3,357.2 646.4,355.7 646.4,354.2 646.4,352.7 646.4,351.2 646.5,349.7 646.5,348.2 646.5,346.7 646.5,345.2 646.6,343.8 646.6,342.3 646.6,340.9 646.7,339.5 646.7,338.1 646.8,336.7 646.8,335.3 646.8,333.9 646.9,332.6 646.9,331.3 647.0,330.0 647.1,328.4 647.1,326.9 647.2,325.4 647.3,323.9 647.4,322.5 647.5,321.1 647.5,319.7 647.6,318.4 647.7,317.0 647.8,315.7 647.9,314.3 648.0,313.0 648.1,311.6 648.2,310.3 648.3,308.9 648.4,307.5 648.5,306.1 648.6,304.6 648.8,303.1 648.9,301.6 649.0,300.0 649.1,298.7 649.2,297.4 649.3,296.0 649.4,294.7 649.5,293.3 649.7,291.9 649.8,290.5 649.9,289.1 650.0,287.6 650.2,286.1 650.3,284.7 650.4,283.2 650.6,281.7 650.7,280.2 650.8,278.7 651.0,277.2 651.1,275.6 651.3,274.1 651.4,272.6 651.5,271.0 651.7,269.5 651.8,268.0 651.9,266.4 652.1,264.9 652.2,263.4 652.4,261.9 652.5,260.3 652.6,258.8 652.8,257.3 652.9,255.8 653.0,254.4 653.2,252.9 653.3,251.4 653.4,250.0 653.5,248.5 653.6,247.0 653.8,245.5 653.9,244.1 654.0,242.6 654.1,241.1 654.2,239.6 654.3,238.2 654.4,236.7 654.5,235.2 654.6,233.8 654.7,232.3 654.8,230.9 654.9,229.4 655.0,228.0 655.1,226.5 655.2,225.1 655.3,223.6 655.4,222.2 655.6,220.7 655.7,219.3 655.8,217.9 655.9,216.4 656.0,215.0 656.1,213.6 656.3,212.1 656.4,210.7 656.6,209.3 656.7,207.9 656.8,206.4 657.0,205.0 657.2,203.5 657.3,202.0 657.5,200.5 657.6,199.0 657.8,197.4 657.9,195.9 658.1,194.3 658.2,192.7 658.4,191.2 658.5,189.6 658.7,188.0 658.9,186.5 659.0,184.9 659.2,183.4 659.4,181.8 659.6,180.3 659.8,178.8 660.0,177.3 660.2,175.9 660.4,174.5 660.6,173.0 660.9,171.7 661.1,170.3 661.4,169.0 661.7,167.7 662.0,166.5 662.3,165.3 662.6,164.1 663.0,163.0 663.6,161.4 664.1,159.9 664.7,158.4 665.3,157.0 666.0,155.6 666.7,154.3 667.4,153.0 668.1,151.8 668.8,150.6 669.6,149.5 670.4,148.5 671.2,147.5 672.0,146.5 673.0,145.5 673.9,144.5 674.9,143.7 675.9,142.9 677.0,142.1 678.1,141.4 679.3,140.8 680.6,140.2 682.0,139.6 683.1,139.2 684.3,138.8 685.5,138.5 686.8,138.2 688.2,137.9 689.5,137.7 691.0,137.4 692.4,137.2 693.9,137.1 695.5,136.9 697.1,136.7 698.6,136.6 700.3,136.5 701.9,136.3 703.6,136.2 705.2,136.1 706.9,135.9 708.6,135.8 709.9,135.7 711.1,135.6 712.4,135.5 713.7,135.4 715.0,135.4 716.3,135.3 717.7,135.2 719.0,135.2 720.4,135.1 721.7,135.1 723.1,135.1 724.5,135.0 725.9,135.0 727.3,135.0 728.7,135.0 730.2,134.9 731.7,134.9 733.1,134.9 734.6,134.9 736.1,134.9 737.7,134.9 739.2,134.8 740.7,134.8 742.3,134.8 743.9,134.8 745.5,134.8 747.1,134.8 748.8,134.8 750.4,134.8 752.1,134.7 753.8,134.7 755.5,134.7 756.7,134.7 758.0,134.7 759.2,134.6 760.5,134.6 761.7,134.6 763.0,134.6 764.3,134.6 765.6,134.6 766.9,134.6 768.2,134.5 769.5,134.5" stroke="#a27414" stroke-dasharray="2 6"/></g><polygon points="464.5,137.5 455.5,152.5 473.5,152.5" fill="none" stroke="#08a8a8" stroke-width="1" shape-rendering="crispEdges"/><text x="465.0" y="172.5" fill="#08a8a8" class="ml" text-anchor="middle">2</text><polygon points="548.5,137.0 539.5,152.0 557.5,152.0" fill="none" stroke="#08a8a8" stroke-width="1" shape-rendering="crispEdges"/><text x="549.0" y="172.0" fill="#08a8a8" class="ml" text-anchor="middle">1</text><polygon points="631.5,137.5 622.5,152.5 640.5,152.5" fill="none" stroke="#08a8a8" stroke-width="1" shape-rendering="crispEdges"/><text x="632.0" y="172.5" fill="#08a8a8" class="ml" text-anchor="middle">3</text><polygon points="129.5,669.0 120.5,684.0 138.5,684.0" fill="none" stroke="#08a8a8" stroke-width="1" shape-rendering="crispEdges"/><text x="130.0" y="704.0" fill="#08a8a8" class="ml" text-anchor="middle">4</text><polygon points="297.8,483.4 288.8,498.4 306.8,498.4" fill="none" stroke="#08a8a8" stroke-width="1" shape-rendering="crispEdges"/><text x="298.2" y="518.4" fill="#08a8a8" class="ml" text-anchor="middle">5</text><polygon points="799.0,490.0 790.0,505.0 808.0,505.0" fill="none" stroke="#08a8a8" stroke-width="1" shape-rendering="crispEdges"/><text x="799.5" y="525.0" fill="#08a8a8" class="ml" text-anchor="middle">6</text><polygon points="967.5,678.5 958.5,663.5 976.5,663.5" fill="none" stroke="#08a8a8" stroke-width="1" shape-rendering="crispEdges"/><text x="968.0" y="659.5" fill="#08a8a8" class="ml" text-anchor="middle">7</text><polygon points="548.5,196.0 539.5,181.0 557.5,181.0" fill="none" stroke="#e070f0" stroke-width="1" shape-rendering="crispEdges"/><text x="549.0" y="177.0" fill="#e070f0" class="ml" text-anchor="middle">8</text><polygon points="548.5,197.0 539.5,212.0 557.5,212.0" fill="none" stroke="#e070f0" stroke-width="1" shape-rendering="crispEdges"/><text x="549.0" y="232.0" fill="#e070f0" class="ml" text-anchor="middle">1</text><polygon points="464.0,303.7 455.0,318.7 473.0,318.7" fill="none" stroke="#e070f0" stroke-width="1" shape-rendering="crispEdges"/><text x="464.5" y="338.7" fill="#e070f0" class="ml" text-anchor="middle">2</text><polygon points="632.5,296.0 623.5,311.0 641.5,311.0" fill="none" stroke="#e070f0" stroke-width="1" shape-rendering="crispEdges"/><text x="633.0" y="331.0" fill="#e070f0" class="ml" text-anchor="middle">3</text><polygon points="632.0,389.0 623.0,374.0 641.0,374.0" fill="none" stroke="#a27414" stroke-width="1" shape-rendering="crispEdges"/><text x="632.5" y="370.0" fill="#a27414" class="ml" text-anchor="middle">8</text><polygon points="632.0,389.0 623.0,404.0 641.0,404.0" fill="none" stroke="#a27414" stroke-width="1" shape-rendering="crispEdges"/><text x="632.5" y="424.0" fill="#a27414" class="ml" text-anchor="middle">3</text><polygon points="464.3,419.0 455.3,434.0 473.3,434.0" fill="none" stroke="#a27414" stroke-width="1" shape-rendering="crispEdges"/><text x="464.8" y="454.0" fill="#a27414" class="ml" text-anchor="middle">2</text><polygon points="548.7,465.0 539.7,480.0 557.7,480.0" fill="none" stroke="#a27414" stroke-width="1" shape-rendering="crispEdges"/><text x="549.2" y="500.0" fill="#a27414" class="ml" text-anchor="middle">1</text><polygon points="632.0,394.0 623.0,379.0 641.0,379.0" fill="none" stroke="#40f840" stroke-width="1" shape-rendering="crispEdges"/><text x="632.5" y="375.0" fill="#40f840" class="ml" text-anchor="middle">8</text><polygon points="632.0,394.0 623.0,409.0 641.0,409.0" fill="none" stroke="#40f840" stroke-width="1" shape-rendering="crispEdges"/><text x="632.5" y="429.0" fill="#40f840" class="ml" text-anchor="middle">3</text><polygon points="464.3,419.0 455.3,434.0 473.3,434.0" fill="none" stroke="#40f840" stroke-width="1" shape-rendering="crispEdges"/><text x="464.8" y="454.0" fill="#40f840" class="ml" text-anchor="middle">2</text><polygon points="548.7,466.0 539.7,481.0 557.7,481.0" fill="none" stroke="#40f840" stroke-width="1" shape-rendering="crispEdges"/><text x="549.2" y="501.0" fill="#40f840" class="ml" text-anchor="middle">1</text><polygon points="78,127 87,133.5 78,140" fill="#00a8a8"/><polygon points="1020,126.5 1010,133.5 1020,140" fill="#00a8a8"/><polygon points="1020,418.5 1010,425.5 1020,432" fill="#e070f0"/></svg>

<div class="a mt c1" style="left:737px;top:157px">1:</div><div class="a mt c1" style="left:789px;top:157px">5.900 0 GHz</div><div class="a mt c1" style="left:897px;width:100px;text-align:right;top:157px">-33.93 dB</div><div class="a mt c1" style="left:737px;top:177px">2:</div><div class="a mt c1" style="left:789px;top:177px">5.800 0 GHz</div><div class="a mt c1" style="left:897px;width:100px;text-align:right;top:177px">-29.26 dB</div><div class="a mt c1" style="left:737px;top:197px">3:</div><div class="a mt c1" style="left:789px;top:197px">6.000 0 GHz</div><div class="a mt c1" style="left:897px;width:100px;text-align:right;top:197px">-26.23 dB</div><div class="a mt c1" style="left:737px;top:217px">8:</div><div class="a mt c1" style="left:789px;top:217px">6.000 0 GHz</div><div class="a mt c1" style="left:897px;width:100px;text-align:right;top:217px">-26.23 dB</div><div class="a mt c2" style="left:737px;top:237px">1:</div><div class="a mt c2" style="left:789px;top:237px">5.900 0 GHz</div><div class="a mt c2" style="left:897px;width:100px;text-align:right;top:237px">-0.59 dB</div><div class="a mt c2" style="left:737px;top:257px">2:</div><div class="a mt c2" style="left:789px;top:257px">5.800 0 GHz</div><div class="a mt c2" style="left:897px;width:100px;text-align:right;top:257px">-0.79 dB</div><div class="a mt c2" style="left:737px;top:277px">3:</div><div class="a mt c2" style="left:789px;top:277px">6.000 0 GHz</div><div class="a mt c2" style="left:897px;width:100px;text-align:right;top:277px">-0.78 dB</div><div class="a mt c2" style="left:737px;top:297px">4:</div><div class="a mt c2" style="left:789px;top:297px">5.400 0 GHz</div><div class="a mt c2" style="left:897px;width:100px;text-align:right;top:297px">-91.92 dB</div><div class="a mt c2" style="left:737px;top:317px">5:</div><div class="a mt c2" style="left:789px;top:317px">5.600 0 GHz</div><div class="a mt c2" style="left:897px;width:100px;text-align:right;top:317px">-59.74 dB</div><div class="a mt c2" style="left:737px;top:337px">6:</div><div class="a mt c2" style="left:789px;top:337px">6.200 0 GHz</div><div class="a mt c2" style="left:897px;width:100px;text-align:right;top:337px">-61.04 dB</div><div class="a mt c2" style="left:737px;top:357px">7:</div><div class="a mt c2" style="left:789px;top:357px">6.400 0 GHz</div><div class="a mt c2" style="left:897px;width:100px;text-align:right;top:357px">-93.55 dB</div><div class="a mt c3" style="left:737px;top:377px">1:</div><div class="a mt c3" style="left:789px;top:377px">5.900 0 GHz</div><div class="a mt c3" style="left:897px;width:100px;text-align:right;top:377px">-0.59 dB</div><div class="a mt c3" style="left:737px;top:397px">2:</div><div class="a mt c3" style="left:789px;top:397px">5.800 0 GHz</div><div class="a mt c3" style="left:897px;width:100px;text-align:right;top:397px">-0.79 dB</div><div class="a mt c3" style="left:737px;top:417px">3:</div><div class="a mt c3" style="left:789px;top:417px">6.000 0 GHz</div><div class="a mt c3" style="left:897px;width:100px;text-align:right;top:417px">-0.78 dB</div><div class="a mt c3" style="left:737px;top:437px">8:</div><div class="a mt c3" style="left:789px;top:437px">5.900 0 GHz</div><div class="a mt c3" style="left:897px;width:100px;text-align:right;top:437px">-0.59 dB</div><div class="a mt c4" style="left:737px;top:457px">1:</div><div class="a mt c4" style="left:789px;top:457px">5.900 0 GHz</div><div class="a mt c4" style="left:897px;width:100px;text-align:right;top:457px">-34.18 dB</div><div class="a mt c4" style="left:737px;top:477px">2:</div><div class="a mt c4" style="left:789px;top:477px">5.800 0 GHz</div><div class="a mt c4" style="left:897px;width:100px;text-align:right;top:477px">-29.32 dB</div><div class="a mt c4" style="left:737px;top:497px">3:</div><div class="a mt c4" style="left:789px;top:497px">6.000 0 GHz</div><div class="a mt c4" style="left:897px;width:100px;text-align:right;top:497px">-26.85 dB</div><div class="a mt c4" style="left:737px;top:517px">8:</div><div class="a mt c4" style="left:789px;top:517px">6.000 0 GHz</div><div class="a mt c4" style="left:897px;width:100px;text-align:right;top:517px">-26.85 dB</div><div class="a mt c2" style="left:726px;top:356px">&gt;</div>

<!-- chart footer -->
<div class="a" style="left:16px;top:723px;width:27px;height:20px;background:#c8c8c8;font-size:16px;line-height:20px;text-align:center;color:#111">1</div>
<div class="a t16" style="left:87px;top:728px;color:#000">&gt;Ch1:</div><div class="a t16" style="left:137px;top:728px;color:#000">Start</div><div class="a t16" style="left:184px;top:728px;color:#000">5.35000 GHz</div>
<div class="a" style="left:285px;top:734px;width:22px;height:2px;background:#a27414"></div>
<div class="a" style="left:312px;top:734px;width:22px;height:2px;background:#08a8a8"></div>
<div class="a" style="left:338px;top:734px;width:22px;height:2px;background:#e070f0"></div>
<div class="a" style="left:365px;top:734px;width:22px;height:2px;background:#40f840"></div>
<div class="a t16" style="left:507px;top:728px;color:#000">RF</div>
<div class="a t16" style="left:545px;top:728px;color:#000">0.00 dBm</div>
<div class="a t16" style="left:871px;top:728px;color:#000">Stop&nbsp; 6.45000 GHz</div>

<!-- status bar -->
<div class="a sb" style="left:4px;width:47px">Tr 2</div>
<div class="a sb" style="left:56px;width:51px">Ch 1</div>
<div class="a sb" style="left:113px;width:59px">IntTrig</div>
<div class="a sb" style="left:178px;width:51px">Swp *</div>
<div class="a sb" style="left:235px;width:75px">BW=1k</div>
<div class="a sb" style="left:316px;width:81px">C&nbsp; 2-Port</div>
<div class="a sb dis" style="left:403px;width:51px">SrcCal</div>
<div class="a sb dis" style="left:460px;width:37px">Fix</div>
<div class="a sb dis" style="left:503px;width:47px">Pulse</div>
<div class="a sb" style="left:556px;width:719px"></div>
<div class="a" style="left:0;top:776px;width:1280px;height:1px;background:#bcbcbc"></div>
<div class="a" style="left:0;top:797px;width:1280px;height:1px;background:#bcbcbc"></div>
<div class="a" style="left:0;top:799px;width:1280px;height:2px;background:#111"></div>

<!-- right panel -->
<div id="panel" class="a">
  <div class="a" style="left:0;top:0;width:247px;height:38px;background:linear-gradient(107.5deg,#3b4e6c 0,#394b69 83px,#2f4161 85px,#2d3f5e 100%);border-bottom:1px solid #20242c;border-radius:0 0 4px 4px"></div>
  <div class="a" style="left:13px;top:11px;font-size:16px;line-height:18px;color:#fff">Avg BW</div>
  <div class="a" style="left:215px;top:7px;width:25px;height:24px;border-radius:4px;border:1px solid #9aa4ac;box-shadow:inset 0 0 0 1px #223;background:radial-gradient(ellipse at 50% 95%,#3f9484,#1f5558 70%);overflow:hidden">
    <div class="a" style="left:2px;top:2px;width:19px;height:5px;background:#8fa2aa"></div>
    <svg class="a" style="left:0;top:0" width="23" height="22"><path d="M7.3 8 L15.7 16.4 M15.7 8 L7.3 16.4" stroke="#fff" stroke-width="2.3"/></svg>
  </div>
  <!-- tab column -->
  <div class="a" style="left:158px;top:103px;width:91px;height:610px;background:#5a5a5a;border-top-left-radius:9px;border-top:1px solid #3a3a30;border-left:1px solid #3a3a30"></div>
  <div class="a" style="left:158px;top:167px;width:91px;height:1px;background:#3a3a3a"></div>
  <div class="a" style="left:158px;top:230px;width:91px;height:1px;background:#3a3a3a"></div>
  <div class="a" style="left:188px;top:64px;font-size:16px;line-height:18px;color:#eef0f4">Main</div>
  <div class="a" style="left:165px;top:127px;font-size:16px;line-height:18px;color:#dcdcdc">Smoothing</div>
  <div class="a" style="left:0;top:180px;width:247px;text-align:center;padding-left:158px;font-size:16px;line-height:20px;color:#dcdcdc">Delay<br>Aperture</div>

  <div class="btn" style="left:5px;top:47px;width:37px;height:72px"><div class="a" style="left:8px;top:32px;width:21px;height:11px;border-radius:3px;background:#7e7e80;border:1px solid #5a5a5c"></div></div>
  <div class="btn" style="left:47px;top:47px;width:107px;height:72px"><div class="a" style="left:0;width:107px;top:9px">Averaging</div><div class="vb" style="top:43px">1</div></div>
  <div class="btn" style="left:5px;top:130px;width:149px;height:72px"><div class="a" style="left:0;width:149px;top:17px;white-space:normal">Averaging<br>Restart</div></div>
  <div class="btn" style="left:5px;top:213px;width:149px;height:72px"><div class="a" style="left:0;width:149px;top:9px">Average Type</div>
    <div class="vb" style="top:43px;background:#e2e2e4;font-size:12px"><div class="a" style="left:0;top:0;width:67px;height:19px;background:#d8d8da;color:#a8a8a8">point</div><div class="a" style="left:67px;top:0;width:68px;height:19px;color:#333">SWEEP</div></div></div>
  <div class="slot" style="left:5px;top:296px;width:149px;height:73px"></div>
  <div class="btn" style="left:5px;top:380px;width:149px;height:72px"><div class="a" style="left:0;width:149px;top:8px">IF Bandwidth</div><div class="vb" style="top:43px">1 kHz</div></div>
  <div class="btn" style="left:5px;top:463px;width:149px;height:72px"><div class="a" style="left:-9px;width:149px;top:8px">IF BW Shape</div><div class="a" style="left:129px;top:10px;font-size:13px;color:#555">&#9660;</div><div class="vb" style="top:43px">Standard</div></div>
  <div class="btn" style="left:5px;top:546px;width:149px;height:72px"><div class="a" style="left:0;width:149px;top:8px">LF Auto BW</div>
    <div class="vb" style="top:43px;background:#e2e2e4"><div class="a" style="left:0;top:0;width:67px;height:19px;color:#333">ON</div><div class="a" style="left:67px;top:0;width:68px;height:19px;background:#d8d8da;color:#a8a8a8">off</div></div></div>
  <div class="slot" style="left:5px;top:629px;width:149px;height:73px"></div>
</div>

<svg class="a" style="left:0;top:0" width="1280" height="801"><text x="207" y="364.5" font-family="Liberation Serif" font-weight="bold" font-size="68" letter-spacing="5.0" fill="rgba(0,0,0,0.07)">www.xahxmicrowave.com</text></svg>
</body></html>
